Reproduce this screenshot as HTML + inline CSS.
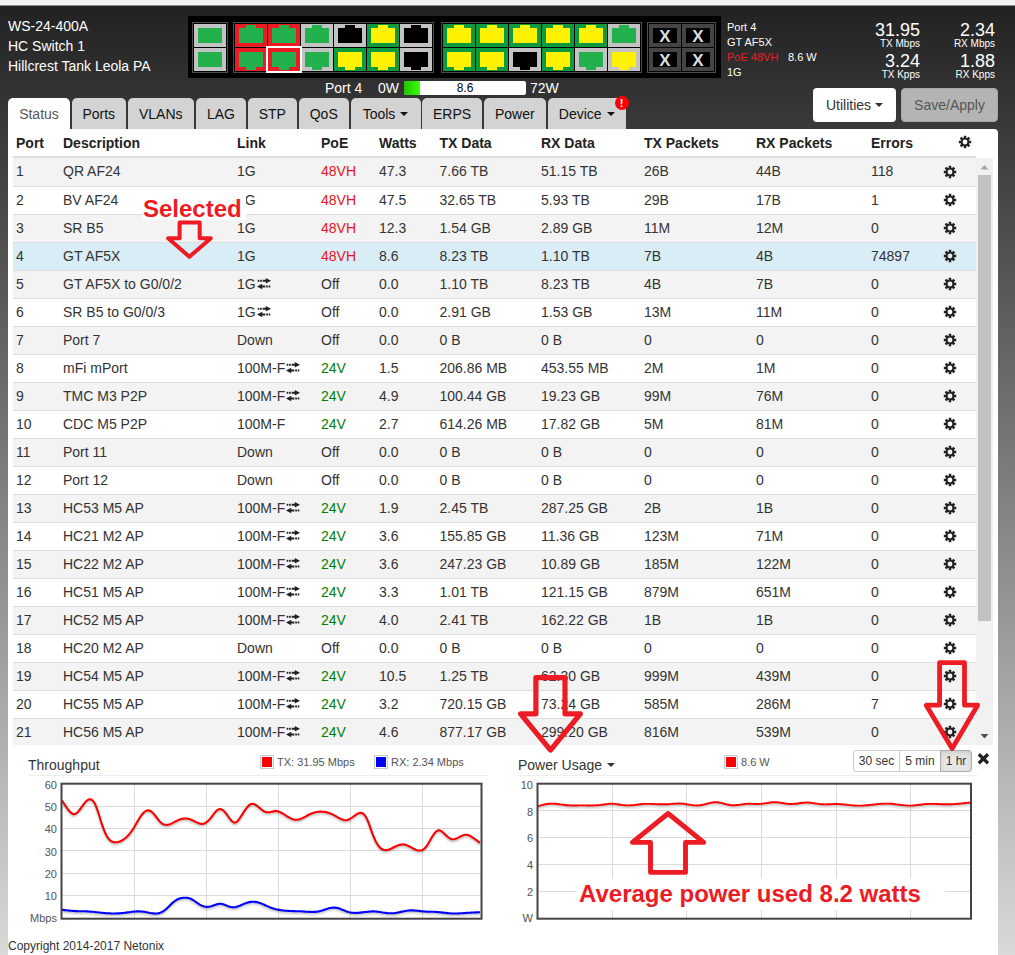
<!DOCTYPE html>
<html><head><meta charset="utf-8"><title>WS-24-400A</title>
<style>
*{box-sizing:border-box}
html,body{margin:0;padding:0}
body{width:1015px;height:955px;position:relative;overflow:hidden;font-family:"Liberation Sans",Arial,sans-serif;font-size:14px;line-height:20px;color:#333;
background:linear-gradient(to bottom,#f2f2f2 0,#f2f2f2 4px,#fafafa 5px,#222 6px,#d9d9d9 955px);}
.abs{position:absolute}
.t{position:absolute;white-space:nowrap}
.w{color:#fff}
#panel{position:absolute;left:8px;top:129px;width:990px;height:830px;background:#fff;border-radius:0 4px 0 0}
.tab{position:absolute;top:98px;height:31px;background:#d3d3d3;border-radius:5px 5px 0 0;color:#111;text-align:center;line-height:20px;padding-top:6px;font-size:14px}
.tab.act{background:#fff;color:#555}
.caret{display:inline-block;width:0;height:0;border-left:4px solid transparent;border-right:4px solid transparent;border-top:4px solid currentColor;vertical-align:middle;margin-left:4px;position:relative;top:-1px}
.row{position:absolute;left:13px;width:963px;height:28px;border-top:1px solid #ddd}
.row.first{border-top:0}
.row span.c{position:absolute;top:3px;white-space:nowrap;line-height:20px}
.odd{background:#f3f3f3}
.sel{background:#d9edf7}
.redt{color:#e8141c}
.grn{color:#008000}
.btn{position:absolute;border-radius:4px;font-size:14px;line-height:20px;text-align:center}
.pg{position:absolute;border:1px solid #4d4d4d}
.pc{position:absolute;width:32px;height:23px}
.pc i{position:absolute;left:4px;top:4px;width:24px;height:15px}
.pc b{position:absolute;left:11px;width:10px;height:4px}
.pc.up b{top:1px}
.pc.dn b{bottom:1px}
.xc{position:absolute;width:32px;height:23px;background:#444}
.xc i{position:absolute;left:4px;top:4px;width:24px;height:15px;background:#000;color:#ddd;font:bold 17px/18px "Liberation Sans",Arial,sans-serif;text-align:center;font-style:normal;overflow:visible}
.yl{position:absolute;font-size:11px;line-height:12px;color:#545454;text-align:right;white-space:nowrap}
.lg{position:absolute;width:14px;height:14px;border:1px solid #ccc;padding:1px;background:#fff}
.lg i{display:block;width:10px;height:10px}
.lt{position:absolute;font-size:11px;line-height:14px;color:#545454;white-space:nowrap}
.bx{position:absolute;top:750px;height:22px;border:1px solid #ccc;background:#fff;font-size:12px;line-height:20px;text-align:center;color:#333}
</style></head><body>

<div class="t w" style="left:8px;top:16px">WS-24-400A</div>
<div class="t w" style="left:8px;top:36px">HC Switch 1</div>
<div class="t w" style="left:8px;top:56px">Hillcrest Tank Leola PA</div>
<div class="abs" style="left:188px;top:16px;width:533px;height:62px;background:#000"></div>
<div class="pg" style="left:192px;top:22px;width:36px;height:51px"></div>
<div class="pg" style="left:233px;top:22px;width:201px;height:51px"></div>
<div class="pg" style="left:441px;top:22px;width:201px;height:51px"></div>
<div class="pg" style="left:647px;top:22px;width:69px;height:51px"></div>
<div class="pc up" style="left:194px;top:24px;background:#c3c3c3"><i style="background:#22b14c"></i></div>
<div class="pc dn" style="left:194px;top:48px;background:#c3c3c3"><i style="background:#22b14c"></i></div>
<div class="pc up" style="left:235px;top:24px;background:#ed1c24"><i style="background:#22b14c"></i><b style="background:#22b14c"></b></div>
<div class="pc up" style="left:268px;top:24px;background:#ed1c24"><i style="background:#22b14c"></i><b style="background:#22b14c"></b></div>
<div class="pc up" style="left:301px;top:24px;background:#c3c3c3"><i style="background:#22b14c"></i><b style="background:#22b14c"></b></div>
<div class="pc up" style="left:334px;top:24px;background:#c3c3c3"><i style="background:#000"></i><b style="background:#000"></b></div>
<div class="pc up" style="left:367px;top:24px;background:#0e9a3f"><i style="background:#fff200"></i><b style="background:#fff200"></b></div>
<div class="pc up" style="left:400px;top:24px;background:#c3c3c3"><i style="background:#000"></i><b style="background:#000"></b></div>
<div class="pc dn" style="left:235px;top:48px;background:#ed1c24"><i style="background:#22b14c"></i><b style="background:#22b14c"></b></div>
<div class="pc dn" style="left:268px;top:48px;background:#ed1c24"><i style="background:#22b14c"></i><b style="background:#22b14c"></b></div>
<div class="pc dn" style="left:301px;top:48px;background:#c3c3c3"><i style="background:#22b14c"></i><b style="background:#22b14c"></b></div>
<div class="pc dn" style="left:334px;top:48px;background:#0e9a3f"><i style="background:#fff200"></i><b style="background:#fff200"></b></div>
<div class="pc dn" style="left:367px;top:48px;background:#0e9a3f"><i style="background:#fff200"></i><b style="background:#fff200"></b></div>
<div class="pc dn" style="left:400px;top:48px;background:#c3c3c3"><i style="background:#000"></i><b style="background:#000"></b></div>
<div class="pc up" style="left:443px;top:24px;background:#0e9a3f"><i style="background:#fff200"></i><b style="background:#fff200"></b></div>
<div class="pc up" style="left:476px;top:24px;background:#0e9a3f"><i style="background:#fff200"></i><b style="background:#fff200"></b></div>
<div class="pc up" style="left:509px;top:24px;background:#0e9a3f"><i style="background:#fff200"></i><b style="background:#fff200"></b></div>
<div class="pc up" style="left:542px;top:24px;background:#0e9a3f"><i style="background:#fff200"></i><b style="background:#fff200"></b></div>
<div class="pc up" style="left:575px;top:24px;background:#0e9a3f"><i style="background:#fff200"></i><b style="background:#fff200"></b></div>
<div class="pc up" style="left:608px;top:24px;background:#c3c3c3"><i style="background:#22b14c"></i><b style="background:#22b14c"></b></div>
<div class="pc dn" style="left:443px;top:48px;background:#0e9a3f"><i style="background:#fff200"></i><b style="background:#fff200"></b></div>
<div class="pc dn" style="left:476px;top:48px;background:#0e9a3f"><i style="background:#fff200"></i><b style="background:#fff200"></b></div>
<div class="pc dn" style="left:509px;top:48px;background:#c3c3c3"><i style="background:#000"></i><b style="background:#000"></b></div>
<div class="pc dn" style="left:542px;top:48px;background:#0e9a3f"><i style="background:#fff200"></i><b style="background:#fff200"></b></div>
<div class="pc dn" style="left:575px;top:48px;background:#c3c3c3"><i style="background:#22b14c"></i><b style="background:#22b14c"></b></div>
<div class="pc dn" style="left:608px;top:48px;background:#c3c3c3"><i style="background:#fff200"></i><b style="background:#fff200"></b></div>
<div class="abs" style="left:266px;top:46px;width:36px;height:27px;border:2px solid #fff"></div>
<div class="xc" style="left:649px;top:24px"><i>X</i></div>
<div class="xc" style="left:649px;top:48px"><i>X</i></div>
<div class="xc" style="left:682px;top:24px"><i>X</i></div>
<div class="xc" style="left:682px;top:48px"><i>X</i></div>
<div class="t w" style="left:325px;top:78px">Port 4</div>
<div class="t w" style="left:378px;top:78px">0W</div>
<div class="abs" style="left:404px;top:81px;width:122px;height:14px;background:#fff;border-radius:2px;overflow:hidden"><div style="width:16px;height:14px;background:linear-gradient(to right,#1fc400,#3cff00)"></div></div>
<div class="t" style="left:404px;top:81px;width:122px;text-align:center;font-size:12px;line-height:14px;color:#000">8.6</div>
<div class="t w" style="left:530px;top:78px">72W</div>
<div class="t w" style="left:727px;top:20px;font-size:11px;line-height:15px">Port 4</div>
<div class="t w" style="left:727px;top:35px;font-size:11px;line-height:15px">GT AF5X</div>
<div class="t" style="left:727px;top:50px;font-size:11px;line-height:15px;color:#ee1c24">PoE 48VH</div>
<div class="t w" style="left:788px;top:50px;font-size:11px;line-height:15px">8.6 W</div>
<div class="t w" style="left:727px;top:65px;font-size:11px;line-height:15px">1G</div>
<div class="t w" style="right:95px;top:20px;font-size:18px;line-height:20px;text-align:right">31.95</div>
<div class="t w" style="right:95px;top:38px;font-size:10px;line-height:12px;text-align:right">TX Mbps</div>
<div class="t w" style="right:20px;top:20px;font-size:18px;line-height:20px;text-align:right">2.34</div>
<div class="t w" style="right:20px;top:38px;font-size:10px;line-height:12px;text-align:right">RX Mbps</div>
<div class="t w" style="right:95px;top:51px;font-size:18px;line-height:20px;text-align:right">3.24</div>
<div class="t w" style="right:95px;top:69px;font-size:10px;line-height:12px;text-align:right">TX Kpps</div>
<div class="t w" style="right:20px;top:51px;font-size:18px;line-height:20px;text-align:right">1.88</div>
<div class="t w" style="right:20px;top:69px;font-size:10px;line-height:12px;text-align:right">RX Kpps</div>
<div class="btn" style="left:813px;top:88px;width:83px;height:34px;background:#fff;color:#333;padding-top:7px">Utilities<span class="caret"></span></div>
<div class="btn" style="left:901px;top:88px;width:97px;height:34px;background:#b4b4b4;color:#555;padding-top:6px;border:1px solid #a8a8a8">Save/Apply</div>
<div class="tab act" style="left:8.0px;width:62.0px">Status</div>
<div class="tab" style="left:72.0px;width:53.5px">Ports</div>
<div class="tab" style="left:127.5px;width:66.5px">VLANs</div>
<div class="tab" style="left:196.0px;width:50.0px">LAG</div>
<div class="tab" style="left:247.5px;width:49.5px">STP</div>
<div class="tab" style="left:298.5px;width:50.5px">QoS</div>
<div class="tab" style="left:350.5px;width:70.0px">Tools<span class="caret" style="margin-left:5px"></span></div>
<div class="tab" style="left:422.0px;width:60.0px">ERPS</div>
<div class="tab" style="left:483.5px;width:62.5px">Power</div>
<div class="tab" style="left:547.5px;width:78.5px">Device<span class="caret" style="margin-left:5px"></span></div>
<div class="abs" style="left:614.5px;top:95.5px;width:14px;height:14px;border-radius:7px;background:#f00;color:#fff;font:bold 11px/14px 'Liberation Sans',Arial,sans-serif;text-align:center">!</div>
<div id="panel"></div>
<div class="t" style="left:16.0px;top:133px;font-weight:bold;color:#222">Port</div>
<div class="t" style="left:63.0px;top:133px;font-weight:bold;color:#222">Description</div>
<div class="t" style="left:237.0px;top:133px;font-weight:bold;color:#222">Link</div>
<div class="t" style="left:321.0px;top:133px;font-weight:bold;color:#222">PoE</div>
<div class="t" style="left:379.0px;top:133px;font-weight:bold;color:#222">Watts</div>
<div class="t" style="left:439.5px;top:133px;font-weight:bold;color:#222">TX Data</div>
<div class="t" style="left:541.0px;top:133px;font-weight:bold;color:#222">RX Data</div>
<div class="t" style="left:644.0px;top:133px;font-weight:bold;color:#222">TX Packets</div>
<div class="t" style="left:756.0px;top:133px;font-weight:bold;color:#222">RX Packets</div>
<div class="t" style="left:871.0px;top:133px;font-weight:bold;color:#222">Errors</div>
<span style="position:absolute;left:957.0px;top:134.0px;width:16px;height:16px"><svg class="gear" viewBox="-8 -8 16 16" width="16" height="16"><g fill="#222"><rect x="-1.3" y="-6.2" width="2.6" height="12.4" transform="rotate(0)"/><rect x="-1.3" y="-6.2" width="2.6" height="12.4" transform="rotate(45)"/><rect x="-1.3" y="-6.2" width="2.6" height="12.4" transform="rotate(90)"/><rect x="-1.3" y="-6.2" width="2.6" height="12.4" transform="rotate(135)"/><circle r="4.3"/></g><circle r="2.4" fill="#fff"/></svg></span>
<div class="abs" style="left:13px;top:156px;width:963px;height:2px;background:#ddd"></div>
<div class="row first odd" style="top:158px;height:28px"><span class="c" style="left:3.0px">1</span><span class="c" style="left:50.0px">QR AF24</span><span class="c" style="left:224.0px">1G</span><span class="c redt" style="left:308.0px">48VH</span><span class="c" style="left:366.0px">47.3</span><span class="c" style="left:426.5px">7.66 TB</span><span class="c" style="left:528.0px">51.15 TB</span><span class="c" style="left:631.0px">26B</span><span class="c" style="left:743.0px">44B</span><span class="c" style="left:858.0px">118</span><span style="position:absolute;left:929.0px;top:6.0px;width:16px;height:16px"><svg class="gear" viewBox="-8 -8 16 16" width="16" height="16"><g fill="#222"><rect x="-1.3" y="-6.2" width="2.6" height="12.4" transform="rotate(0)"/><rect x="-1.3" y="-6.2" width="2.6" height="12.4" transform="rotate(45)"/><rect x="-1.3" y="-6.2" width="2.6" height="12.4" transform="rotate(90)"/><rect x="-1.3" y="-6.2" width="2.6" height="12.4" transform="rotate(135)"/><circle r="4.3"/></g><circle r="2.4" fill="#f3f3f3"/></svg></span></div>
<div class="row" style="top:186px;height:28px"><span class="c" style="left:3.0px">2</span><span class="c" style="left:50.0px">BV AF24</span><span class="c" style="left:224.0px">1G</span><span class="c redt" style="left:308.0px">48VH</span><span class="c" style="left:366.0px">47.5</span><span class="c" style="left:426.5px">32.65 TB</span><span class="c" style="left:528.0px">5.93 TB</span><span class="c" style="left:631.0px">29B</span><span class="c" style="left:743.0px">17B</span><span class="c" style="left:858.0px">1</span><span style="position:absolute;left:929.0px;top:5.0px;width:16px;height:16px"><svg class="gear" viewBox="-8 -8 16 16" width="16" height="16"><g fill="#222"><rect x="-1.3" y="-6.2" width="2.6" height="12.4" transform="rotate(0)"/><rect x="-1.3" y="-6.2" width="2.6" height="12.4" transform="rotate(45)"/><rect x="-1.3" y="-6.2" width="2.6" height="12.4" transform="rotate(90)"/><rect x="-1.3" y="-6.2" width="2.6" height="12.4" transform="rotate(135)"/><circle r="4.3"/></g><circle r="2.4" fill="#fff"/></svg></span></div>
<div class="row odd" style="top:214px;height:28px"><span class="c" style="left:3.0px">3</span><span class="c" style="left:50.0px">SR B5</span><span class="c" style="left:224.0px">1G</span><span class="c redt" style="left:308.0px">48VH</span><span class="c" style="left:366.0px">12.3</span><span class="c" style="left:426.5px">1.54 GB</span><span class="c" style="left:528.0px">2.89 GB</span><span class="c" style="left:631.0px">11M</span><span class="c" style="left:743.0px">12M</span><span class="c" style="left:858.0px">0</span><span style="position:absolute;left:929.0px;top:5.0px;width:16px;height:16px"><svg class="gear" viewBox="-8 -8 16 16" width="16" height="16"><g fill="#222"><rect x="-1.3" y="-6.2" width="2.6" height="12.4" transform="rotate(0)"/><rect x="-1.3" y="-6.2" width="2.6" height="12.4" transform="rotate(45)"/><rect x="-1.3" y="-6.2" width="2.6" height="12.4" transform="rotate(90)"/><rect x="-1.3" y="-6.2" width="2.6" height="12.4" transform="rotate(135)"/><circle r="4.3"/></g><circle r="2.4" fill="#f3f3f3"/></svg></span></div>
<div class="row sel" style="top:242px;height:28px"><span class="c" style="left:3.0px">4</span><span class="c" style="left:50.0px">GT AF5X</span><span class="c" style="left:224.0px">1G</span><span class="c redt" style="left:308.0px">48VH</span><span class="c" style="left:366.0px">8.6</span><span class="c" style="left:426.5px">8.23 TB</span><span class="c" style="left:528.0px">1.10 TB</span><span class="c" style="left:631.0px">7B</span><span class="c" style="left:743.0px">4B</span><span class="c" style="left:858.0px">74897</span><span style="position:absolute;left:929.0px;top:5.0px;width:16px;height:16px"><svg class="gear" viewBox="-8 -8 16 16" width="16" height="16"><g fill="#222"><rect x="-1.3" y="-6.2" width="2.6" height="12.4" transform="rotate(0)"/><rect x="-1.3" y="-6.2" width="2.6" height="12.4" transform="rotate(45)"/><rect x="-1.3" y="-6.2" width="2.6" height="12.4" transform="rotate(90)"/><rect x="-1.3" y="-6.2" width="2.6" height="12.4" transform="rotate(135)"/><circle r="4.3"/></g><circle r="2.4" fill="#d9edf7"/></svg></span></div>
<div class="row odd" style="top:270px;height:28px"><span class="c" style="left:3.0px">5</span><span class="c" style="left:50.0px">GT AF5X to G0/0/2</span><span class="c" style="left:224.0px">1G</span><span class="c" style="left:308.0px">Off</span><span class="c" style="left:366.0px">0.0</span><span class="c" style="left:426.5px">1.10 TB</span><span class="c" style="left:528.0px">8.23 TB</span><span class="c" style="left:631.0px">4B</span><span class="c" style="left:743.0px">7B</span><span class="c" style="left:858.0px">0</span><svg viewBox="0 0 14 11.4" width="14" height="11.4" style="position:absolute;left:244.0px;top:7.2px"><g fill="#222"><path d="M8.8 0L14 2.8 8.8 5.6V3.8H5.7V1.8h3.1z"/><rect x="3.1" y="1.8" width="1.7" height="2"/><rect x="0.7" y="1.8" width="1.6" height="2"/><path d="M5.2 5.7L0 8.5l5.2 2.8V9.5h3.1V7.5H5.2z"/><rect x="9.2" y="7.5" width="1.7" height="2"/><rect x="11.7" y="7.5" width="1.6" height="2"/></g></svg><span style="position:absolute;left:929.0px;top:5.0px;width:16px;height:16px"><svg class="gear" viewBox="-8 -8 16 16" width="16" height="16"><g fill="#222"><rect x="-1.3" y="-6.2" width="2.6" height="12.4" transform="rotate(0)"/><rect x="-1.3" y="-6.2" width="2.6" height="12.4" transform="rotate(45)"/><rect x="-1.3" y="-6.2" width="2.6" height="12.4" transform="rotate(90)"/><rect x="-1.3" y="-6.2" width="2.6" height="12.4" transform="rotate(135)"/><circle r="4.3"/></g><circle r="2.4" fill="#f3f3f3"/></svg></span></div>
<div class="row" style="top:298px;height:28px"><span class="c" style="left:3.0px">6</span><span class="c" style="left:50.0px">SR B5 to G0/0/3</span><span class="c" style="left:224.0px">1G</span><span class="c" style="left:308.0px">Off</span><span class="c" style="left:366.0px">0.0</span><span class="c" style="left:426.5px">2.91 GB</span><span class="c" style="left:528.0px">1.53 GB</span><span class="c" style="left:631.0px">13M</span><span class="c" style="left:743.0px">11M</span><span class="c" style="left:858.0px">0</span><svg viewBox="0 0 14 11.4" width="14" height="11.4" style="position:absolute;left:244.0px;top:7.2px"><g fill="#222"><path d="M8.8 0L14 2.8 8.8 5.6V3.8H5.7V1.8h3.1z"/><rect x="3.1" y="1.8" width="1.7" height="2"/><rect x="0.7" y="1.8" width="1.6" height="2"/><path d="M5.2 5.7L0 8.5l5.2 2.8V9.5h3.1V7.5H5.2z"/><rect x="9.2" y="7.5" width="1.7" height="2"/><rect x="11.7" y="7.5" width="1.6" height="2"/></g></svg><span style="position:absolute;left:929.0px;top:5.0px;width:16px;height:16px"><svg class="gear" viewBox="-8 -8 16 16" width="16" height="16"><g fill="#222"><rect x="-1.3" y="-6.2" width="2.6" height="12.4" transform="rotate(0)"/><rect x="-1.3" y="-6.2" width="2.6" height="12.4" transform="rotate(45)"/><rect x="-1.3" y="-6.2" width="2.6" height="12.4" transform="rotate(90)"/><rect x="-1.3" y="-6.2" width="2.6" height="12.4" transform="rotate(135)"/><circle r="4.3"/></g><circle r="2.4" fill="#fff"/></svg></span></div>
<div class="row odd" style="top:326px;height:28px"><span class="c" style="left:3.0px">7</span><span class="c" style="left:50.0px">Port 7</span><span class="c" style="left:224.0px">Down</span><span class="c" style="left:308.0px">Off</span><span class="c" style="left:366.0px">0.0</span><span class="c" style="left:426.5px">0 B</span><span class="c" style="left:528.0px">0 B</span><span class="c" style="left:631.0px">0</span><span class="c" style="left:743.0px">0</span><span class="c" style="left:858.0px">0</span><span style="position:absolute;left:929.0px;top:5.0px;width:16px;height:16px"><svg class="gear" viewBox="-8 -8 16 16" width="16" height="16"><g fill="#222"><rect x="-1.3" y="-6.2" width="2.6" height="12.4" transform="rotate(0)"/><rect x="-1.3" y="-6.2" width="2.6" height="12.4" transform="rotate(45)"/><rect x="-1.3" y="-6.2" width="2.6" height="12.4" transform="rotate(90)"/><rect x="-1.3" y="-6.2" width="2.6" height="12.4" transform="rotate(135)"/><circle r="4.3"/></g><circle r="2.4" fill="#f3f3f3"/></svg></span></div>
<div class="row" style="top:354px;height:28px"><span class="c" style="left:3.0px">8</span><span class="c" style="left:50.0px">mFi mPort</span><span class="c" style="left:224.0px">100M-F</span><span class="c grn" style="left:308.0px">24V</span><span class="c" style="left:366.0px">1.5</span><span class="c" style="left:426.5px">206.86 MB</span><span class="c" style="left:528.0px">453.55 MB</span><span class="c" style="left:631.0px">2M</span><span class="c" style="left:743.0px">1M</span><span class="c" style="left:858.0px">0</span><svg viewBox="0 0 14 11.4" width="14" height="11.4" style="position:absolute;left:273.0px;top:7.2px"><g fill="#222"><path d="M8.8 0L14 2.8 8.8 5.6V3.8H5.7V1.8h3.1z"/><rect x="3.1" y="1.8" width="1.7" height="2"/><rect x="0.7" y="1.8" width="1.6" height="2"/><path d="M5.2 5.7L0 8.5l5.2 2.8V9.5h3.1V7.5H5.2z"/><rect x="9.2" y="7.5" width="1.7" height="2"/><rect x="11.7" y="7.5" width="1.6" height="2"/></g></svg><span style="position:absolute;left:929.0px;top:5.0px;width:16px;height:16px"><svg class="gear" viewBox="-8 -8 16 16" width="16" height="16"><g fill="#222"><rect x="-1.3" y="-6.2" width="2.6" height="12.4" transform="rotate(0)"/><rect x="-1.3" y="-6.2" width="2.6" height="12.4" transform="rotate(45)"/><rect x="-1.3" y="-6.2" width="2.6" height="12.4" transform="rotate(90)"/><rect x="-1.3" y="-6.2" width="2.6" height="12.4" transform="rotate(135)"/><circle r="4.3"/></g><circle r="2.4" fill="#fff"/></svg></span></div>
<div class="row odd" style="top:382px;height:28px"><span class="c" style="left:3.0px">9</span><span class="c" style="left:50.0px">TMC M3 P2P</span><span class="c" style="left:224.0px">100M-F</span><span class="c grn" style="left:308.0px">24V</span><span class="c" style="left:366.0px">4.9</span><span class="c" style="left:426.5px">100.44 GB</span><span class="c" style="left:528.0px">19.23 GB</span><span class="c" style="left:631.0px">99M</span><span class="c" style="left:743.0px">76M</span><span class="c" style="left:858.0px">0</span><svg viewBox="0 0 14 11.4" width="14" height="11.4" style="position:absolute;left:273.0px;top:7.2px"><g fill="#222"><path d="M8.8 0L14 2.8 8.8 5.6V3.8H5.7V1.8h3.1z"/><rect x="3.1" y="1.8" width="1.7" height="2"/><rect x="0.7" y="1.8" width="1.6" height="2"/><path d="M5.2 5.7L0 8.5l5.2 2.8V9.5h3.1V7.5H5.2z"/><rect x="9.2" y="7.5" width="1.7" height="2"/><rect x="11.7" y="7.5" width="1.6" height="2"/></g></svg><span style="position:absolute;left:929.0px;top:5.0px;width:16px;height:16px"><svg class="gear" viewBox="-8 -8 16 16" width="16" height="16"><g fill="#222"><rect x="-1.3" y="-6.2" width="2.6" height="12.4" transform="rotate(0)"/><rect x="-1.3" y="-6.2" width="2.6" height="12.4" transform="rotate(45)"/><rect x="-1.3" y="-6.2" width="2.6" height="12.4" transform="rotate(90)"/><rect x="-1.3" y="-6.2" width="2.6" height="12.4" transform="rotate(135)"/><circle r="4.3"/></g><circle r="2.4" fill="#f3f3f3"/></svg></span></div>
<div class="row" style="top:410px;height:28px"><span class="c" style="left:3.0px">10</span><span class="c" style="left:50.0px">CDC M5 P2P</span><span class="c" style="left:224.0px">100M-F</span><span class="c grn" style="left:308.0px">24V</span><span class="c" style="left:366.0px">2.7</span><span class="c" style="left:426.5px">614.26 MB</span><span class="c" style="left:528.0px">17.82 GB</span><span class="c" style="left:631.0px">5M</span><span class="c" style="left:743.0px">81M</span><span class="c" style="left:858.0px">0</span><span style="position:absolute;left:929.0px;top:5.0px;width:16px;height:16px"><svg class="gear" viewBox="-8 -8 16 16" width="16" height="16"><g fill="#222"><rect x="-1.3" y="-6.2" width="2.6" height="12.4" transform="rotate(0)"/><rect x="-1.3" y="-6.2" width="2.6" height="12.4" transform="rotate(45)"/><rect x="-1.3" y="-6.2" width="2.6" height="12.4" transform="rotate(90)"/><rect x="-1.3" y="-6.2" width="2.6" height="12.4" transform="rotate(135)"/><circle r="4.3"/></g><circle r="2.4" fill="#fff"/></svg></span></div>
<div class="row odd" style="top:438px;height:28px"><span class="c" style="left:3.0px">11</span><span class="c" style="left:50.0px">Port 11</span><span class="c" style="left:224.0px">Down</span><span class="c" style="left:308.0px">Off</span><span class="c" style="left:366.0px">0.0</span><span class="c" style="left:426.5px">0 B</span><span class="c" style="left:528.0px">0 B</span><span class="c" style="left:631.0px">0</span><span class="c" style="left:743.0px">0</span><span class="c" style="left:858.0px">0</span><span style="position:absolute;left:929.0px;top:5.0px;width:16px;height:16px"><svg class="gear" viewBox="-8 -8 16 16" width="16" height="16"><g fill="#222"><rect x="-1.3" y="-6.2" width="2.6" height="12.4" transform="rotate(0)"/><rect x="-1.3" y="-6.2" width="2.6" height="12.4" transform="rotate(45)"/><rect x="-1.3" y="-6.2" width="2.6" height="12.4" transform="rotate(90)"/><rect x="-1.3" y="-6.2" width="2.6" height="12.4" transform="rotate(135)"/><circle r="4.3"/></g><circle r="2.4" fill="#f3f3f3"/></svg></span></div>
<div class="row" style="top:466px;height:28px"><span class="c" style="left:3.0px">12</span><span class="c" style="left:50.0px">Port 12</span><span class="c" style="left:224.0px">Down</span><span class="c" style="left:308.0px">Off</span><span class="c" style="left:366.0px">0.0</span><span class="c" style="left:426.5px">0 B</span><span class="c" style="left:528.0px">0 B</span><span class="c" style="left:631.0px">0</span><span class="c" style="left:743.0px">0</span><span class="c" style="left:858.0px">0</span><span style="position:absolute;left:929.0px;top:5.0px;width:16px;height:16px"><svg class="gear" viewBox="-8 -8 16 16" width="16" height="16"><g fill="#222"><rect x="-1.3" y="-6.2" width="2.6" height="12.4" transform="rotate(0)"/><rect x="-1.3" y="-6.2" width="2.6" height="12.4" transform="rotate(45)"/><rect x="-1.3" y="-6.2" width="2.6" height="12.4" transform="rotate(90)"/><rect x="-1.3" y="-6.2" width="2.6" height="12.4" transform="rotate(135)"/><circle r="4.3"/></g><circle r="2.4" fill="#fff"/></svg></span></div>
<div class="row odd" style="top:494px;height:28px"><span class="c" style="left:3.0px">13</span><span class="c" style="left:50.0px">HC53 M5 AP</span><span class="c" style="left:224.0px">100M-F</span><span class="c grn" style="left:308.0px">24V</span><span class="c" style="left:366.0px">1.9</span><span class="c" style="left:426.5px">2.45 TB</span><span class="c" style="left:528.0px">287.25 GB</span><span class="c" style="left:631.0px">2B</span><span class="c" style="left:743.0px">1B</span><span class="c" style="left:858.0px">0</span><svg viewBox="0 0 14 11.4" width="14" height="11.4" style="position:absolute;left:273.0px;top:7.2px"><g fill="#222"><path d="M8.8 0L14 2.8 8.8 5.6V3.8H5.7V1.8h3.1z"/><rect x="3.1" y="1.8" width="1.7" height="2"/><rect x="0.7" y="1.8" width="1.6" height="2"/><path d="M5.2 5.7L0 8.5l5.2 2.8V9.5h3.1V7.5H5.2z"/><rect x="9.2" y="7.5" width="1.7" height="2"/><rect x="11.7" y="7.5" width="1.6" height="2"/></g></svg><span style="position:absolute;left:929.0px;top:5.0px;width:16px;height:16px"><svg class="gear" viewBox="-8 -8 16 16" width="16" height="16"><g fill="#222"><rect x="-1.3" y="-6.2" width="2.6" height="12.4" transform="rotate(0)"/><rect x="-1.3" y="-6.2" width="2.6" height="12.4" transform="rotate(45)"/><rect x="-1.3" y="-6.2" width="2.6" height="12.4" transform="rotate(90)"/><rect x="-1.3" y="-6.2" width="2.6" height="12.4" transform="rotate(135)"/><circle r="4.3"/></g><circle r="2.4" fill="#f3f3f3"/></svg></span></div>
<div class="row" style="top:522px;height:28px"><span class="c" style="left:3.0px">14</span><span class="c" style="left:50.0px">HC21 M2 AP</span><span class="c" style="left:224.0px">100M-F</span><span class="c grn" style="left:308.0px">24V</span><span class="c" style="left:366.0px">3.6</span><span class="c" style="left:426.5px">155.85 GB</span><span class="c" style="left:528.0px">11.36 GB</span><span class="c" style="left:631.0px">123M</span><span class="c" style="left:743.0px">71M</span><span class="c" style="left:858.0px">0</span><svg viewBox="0 0 14 11.4" width="14" height="11.4" style="position:absolute;left:273.0px;top:7.2px"><g fill="#222"><path d="M8.8 0L14 2.8 8.8 5.6V3.8H5.7V1.8h3.1z"/><rect x="3.1" y="1.8" width="1.7" height="2"/><rect x="0.7" y="1.8" width="1.6" height="2"/><path d="M5.2 5.7L0 8.5l5.2 2.8V9.5h3.1V7.5H5.2z"/><rect x="9.2" y="7.5" width="1.7" height="2"/><rect x="11.7" y="7.5" width="1.6" height="2"/></g></svg><span style="position:absolute;left:929.0px;top:5.0px;width:16px;height:16px"><svg class="gear" viewBox="-8 -8 16 16" width="16" height="16"><g fill="#222"><rect x="-1.3" y="-6.2" width="2.6" height="12.4" transform="rotate(0)"/><rect x="-1.3" y="-6.2" width="2.6" height="12.4" transform="rotate(45)"/><rect x="-1.3" y="-6.2" width="2.6" height="12.4" transform="rotate(90)"/><rect x="-1.3" y="-6.2" width="2.6" height="12.4" transform="rotate(135)"/><circle r="4.3"/></g><circle r="2.4" fill="#fff"/></svg></span></div>
<div class="row odd" style="top:550px;height:28px"><span class="c" style="left:3.0px">15</span><span class="c" style="left:50.0px">HC22 M2 AP</span><span class="c" style="left:224.0px">100M-F</span><span class="c grn" style="left:308.0px">24V</span><span class="c" style="left:366.0px">3.6</span><span class="c" style="left:426.5px">247.23 GB</span><span class="c" style="left:528.0px">10.89 GB</span><span class="c" style="left:631.0px">185M</span><span class="c" style="left:743.0px">122M</span><span class="c" style="left:858.0px">0</span><svg viewBox="0 0 14 11.4" width="14" height="11.4" style="position:absolute;left:273.0px;top:7.2px"><g fill="#222"><path d="M8.8 0L14 2.8 8.8 5.6V3.8H5.7V1.8h3.1z"/><rect x="3.1" y="1.8" width="1.7" height="2"/><rect x="0.7" y="1.8" width="1.6" height="2"/><path d="M5.2 5.7L0 8.5l5.2 2.8V9.5h3.1V7.5H5.2z"/><rect x="9.2" y="7.5" width="1.7" height="2"/><rect x="11.7" y="7.5" width="1.6" height="2"/></g></svg><span style="position:absolute;left:929.0px;top:5.0px;width:16px;height:16px"><svg class="gear" viewBox="-8 -8 16 16" width="16" height="16"><g fill="#222"><rect x="-1.3" y="-6.2" width="2.6" height="12.4" transform="rotate(0)"/><rect x="-1.3" y="-6.2" width="2.6" height="12.4" transform="rotate(45)"/><rect x="-1.3" y="-6.2" width="2.6" height="12.4" transform="rotate(90)"/><rect x="-1.3" y="-6.2" width="2.6" height="12.4" transform="rotate(135)"/><circle r="4.3"/></g><circle r="2.4" fill="#f3f3f3"/></svg></span></div>
<div class="row" style="top:578px;height:28px"><span class="c" style="left:3.0px">16</span><span class="c" style="left:50.0px">HC51 M5 AP</span><span class="c" style="left:224.0px">100M-F</span><span class="c grn" style="left:308.0px">24V</span><span class="c" style="left:366.0px">3.3</span><span class="c" style="left:426.5px">1.01 TB</span><span class="c" style="left:528.0px">121.15 GB</span><span class="c" style="left:631.0px">879M</span><span class="c" style="left:743.0px">651M</span><span class="c" style="left:858.0px">0</span><svg viewBox="0 0 14 11.4" width="14" height="11.4" style="position:absolute;left:273.0px;top:7.2px"><g fill="#222"><path d="M8.8 0L14 2.8 8.8 5.6V3.8H5.7V1.8h3.1z"/><rect x="3.1" y="1.8" width="1.7" height="2"/><rect x="0.7" y="1.8" width="1.6" height="2"/><path d="M5.2 5.7L0 8.5l5.2 2.8V9.5h3.1V7.5H5.2z"/><rect x="9.2" y="7.5" width="1.7" height="2"/><rect x="11.7" y="7.5" width="1.6" height="2"/></g></svg><span style="position:absolute;left:929.0px;top:5.0px;width:16px;height:16px"><svg class="gear" viewBox="-8 -8 16 16" width="16" height="16"><g fill="#222"><rect x="-1.3" y="-6.2" width="2.6" height="12.4" transform="rotate(0)"/><rect x="-1.3" y="-6.2" width="2.6" height="12.4" transform="rotate(45)"/><rect x="-1.3" y="-6.2" width="2.6" height="12.4" transform="rotate(90)"/><rect x="-1.3" y="-6.2" width="2.6" height="12.4" transform="rotate(135)"/><circle r="4.3"/></g><circle r="2.4" fill="#fff"/></svg></span></div>
<div class="row odd" style="top:606px;height:28px"><span class="c" style="left:3.0px">17</span><span class="c" style="left:50.0px">HC52 M5 AP</span><span class="c" style="left:224.0px">100M-F</span><span class="c grn" style="left:308.0px">24V</span><span class="c" style="left:366.0px">4.0</span><span class="c" style="left:426.5px">2.41 TB</span><span class="c" style="left:528.0px">162.22 GB</span><span class="c" style="left:631.0px">1B</span><span class="c" style="left:743.0px">1B</span><span class="c" style="left:858.0px">0</span><svg viewBox="0 0 14 11.4" width="14" height="11.4" style="position:absolute;left:273.0px;top:7.2px"><g fill="#222"><path d="M8.8 0L14 2.8 8.8 5.6V3.8H5.7V1.8h3.1z"/><rect x="3.1" y="1.8" width="1.7" height="2"/><rect x="0.7" y="1.8" width="1.6" height="2"/><path d="M5.2 5.7L0 8.5l5.2 2.8V9.5h3.1V7.5H5.2z"/><rect x="9.2" y="7.5" width="1.7" height="2"/><rect x="11.7" y="7.5" width="1.6" height="2"/></g></svg><span style="position:absolute;left:929.0px;top:5.0px;width:16px;height:16px"><svg class="gear" viewBox="-8 -8 16 16" width="16" height="16"><g fill="#222"><rect x="-1.3" y="-6.2" width="2.6" height="12.4" transform="rotate(0)"/><rect x="-1.3" y="-6.2" width="2.6" height="12.4" transform="rotate(45)"/><rect x="-1.3" y="-6.2" width="2.6" height="12.4" transform="rotate(90)"/><rect x="-1.3" y="-6.2" width="2.6" height="12.4" transform="rotate(135)"/><circle r="4.3"/></g><circle r="2.4" fill="#f3f3f3"/></svg></span></div>
<div class="row" style="top:634px;height:28px"><span class="c" style="left:3.0px">18</span><span class="c" style="left:50.0px">HC20 M2 AP</span><span class="c" style="left:224.0px">Down</span><span class="c" style="left:308.0px">Off</span><span class="c" style="left:366.0px">0.0</span><span class="c" style="left:426.5px">0 B</span><span class="c" style="left:528.0px">0 B</span><span class="c" style="left:631.0px">0</span><span class="c" style="left:743.0px">0</span><span class="c" style="left:858.0px">0</span><span style="position:absolute;left:929.0px;top:5.0px;width:16px;height:16px"><svg class="gear" viewBox="-8 -8 16 16" width="16" height="16"><g fill="#222"><rect x="-1.3" y="-6.2" width="2.6" height="12.4" transform="rotate(0)"/><rect x="-1.3" y="-6.2" width="2.6" height="12.4" transform="rotate(45)"/><rect x="-1.3" y="-6.2" width="2.6" height="12.4" transform="rotate(90)"/><rect x="-1.3" y="-6.2" width="2.6" height="12.4" transform="rotate(135)"/><circle r="4.3"/></g><circle r="2.4" fill="#fff"/></svg></span></div>
<div class="row odd" style="top:662px;height:28px"><span class="c" style="left:3.0px">19</span><span class="c" style="left:50.0px">HC54 M5 AP</span><span class="c" style="left:224.0px">100M-F</span><span class="c grn" style="left:308.0px">24V</span><span class="c" style="left:366.0px">10.5</span><span class="c" style="left:426.5px">1.25 TB</span><span class="c" style="left:528.0px">62.30 GB</span><span class="c" style="left:631.0px">999M</span><span class="c" style="left:743.0px">439M</span><span class="c" style="left:858.0px">0</span><svg viewBox="0 0 14 11.4" width="14" height="11.4" style="position:absolute;left:273.0px;top:7.2px"><g fill="#222"><path d="M8.8 0L14 2.8 8.8 5.6V3.8H5.7V1.8h3.1z"/><rect x="3.1" y="1.8" width="1.7" height="2"/><rect x="0.7" y="1.8" width="1.6" height="2"/><path d="M5.2 5.7L0 8.5l5.2 2.8V9.5h3.1V7.5H5.2z"/><rect x="9.2" y="7.5" width="1.7" height="2"/><rect x="11.7" y="7.5" width="1.6" height="2"/></g></svg><span style="position:absolute;left:929.0px;top:5.0px;width:16px;height:16px"><svg class="gear" viewBox="-8 -8 16 16" width="16" height="16"><g fill="#222"><rect x="-1.3" y="-6.2" width="2.6" height="12.4" transform="rotate(0)"/><rect x="-1.3" y="-6.2" width="2.6" height="12.4" transform="rotate(45)"/><rect x="-1.3" y="-6.2" width="2.6" height="12.4" transform="rotate(90)"/><rect x="-1.3" y="-6.2" width="2.6" height="12.4" transform="rotate(135)"/><circle r="4.3"/></g><circle r="2.4" fill="#f3f3f3"/></svg></span></div>
<div class="row" style="top:690px;height:28px"><span class="c" style="left:3.0px">20</span><span class="c" style="left:50.0px">HC55 M5 AP</span><span class="c" style="left:224.0px">100M-F</span><span class="c grn" style="left:308.0px">24V</span><span class="c" style="left:366.0px">3.2</span><span class="c" style="left:426.5px">720.15 GB</span><span class="c" style="left:528.0px">73.24 GB</span><span class="c" style="left:631.0px">585M</span><span class="c" style="left:743.0px">286M</span><span class="c" style="left:858.0px">7</span><svg viewBox="0 0 14 11.4" width="14" height="11.4" style="position:absolute;left:273.0px;top:7.2px"><g fill="#222"><path d="M8.8 0L14 2.8 8.8 5.6V3.8H5.7V1.8h3.1z"/><rect x="3.1" y="1.8" width="1.7" height="2"/><rect x="0.7" y="1.8" width="1.6" height="2"/><path d="M5.2 5.7L0 8.5l5.2 2.8V9.5h3.1V7.5H5.2z"/><rect x="9.2" y="7.5" width="1.7" height="2"/><rect x="11.7" y="7.5" width="1.6" height="2"/></g></svg><span style="position:absolute;left:929.0px;top:5.0px;width:16px;height:16px"><svg class="gear" viewBox="-8 -8 16 16" width="16" height="16"><g fill="#222"><rect x="-1.3" y="-6.2" width="2.6" height="12.4" transform="rotate(0)"/><rect x="-1.3" y="-6.2" width="2.6" height="12.4" transform="rotate(45)"/><rect x="-1.3" y="-6.2" width="2.6" height="12.4" transform="rotate(90)"/><rect x="-1.3" y="-6.2" width="2.6" height="12.4" transform="rotate(135)"/><circle r="4.3"/></g><circle r="2.4" fill="#fff"/></svg></span></div>
<div class="row odd" style="top:718px;height:27px"><span class="c" style="left:3.0px">21</span><span class="c" style="left:50.0px">HC56 M5 AP</span><span class="c" style="left:224.0px">100M-F</span><span class="c grn" style="left:308.0px">24V</span><span class="c" style="left:366.0px">4.6</span><span class="c" style="left:426.5px">877.17 GB</span><span class="c" style="left:528.0px">299.20 GB</span><span class="c" style="left:631.0px">816M</span><span class="c" style="left:743.0px">539M</span><span class="c" style="left:858.0px">0</span><svg viewBox="0 0 14 11.4" width="14" height="11.4" style="position:absolute;left:273.0px;top:7.2px"><g fill="#222"><path d="M8.8 0L14 2.8 8.8 5.6V3.8H5.7V1.8h3.1z"/><rect x="3.1" y="1.8" width="1.7" height="2"/><rect x="0.7" y="1.8" width="1.6" height="2"/><path d="M5.2 5.7L0 8.5l5.2 2.8V9.5h3.1V7.5H5.2z"/><rect x="9.2" y="7.5" width="1.7" height="2"/><rect x="11.7" y="7.5" width="1.6" height="2"/></g></svg><span style="position:absolute;left:929.0px;top:5.0px;width:16px;height:16px"><svg class="gear" viewBox="-8 -8 16 16" width="16" height="16"><g fill="#222"><rect x="-1.3" y="-6.2" width="2.6" height="12.4" transform="rotate(0)"/><rect x="-1.3" y="-6.2" width="2.6" height="12.4" transform="rotate(45)"/><rect x="-1.3" y="-6.2" width="2.6" height="12.4" transform="rotate(90)"/><rect x="-1.3" y="-6.2" width="2.6" height="12.4" transform="rotate(135)"/><circle r="4.3"/></g><circle r="2.4" fill="#f3f3f3"/></svg></span></div>
<div class="abs" style="left:8px;top:745px;width:990px;height:20px;background:#fff"></div>
<div class="abs" style="left:976px;top:158px;width:17px;height:587px;background:#f1f1f1"></div>
<div class="abs" style="left:978px;top:175px;width:13px;height:446px;background:#c1c1c1"></div>
<svg class="abs" style="left:976px;top:158px" width="17" height="17"><path d="M4.5 11.5h8l-4-4.5z" fill="#a3a3a3"/></svg>
<svg class="abs" style="left:976px;top:728px" width="17" height="17"><path d="M4.5 6h8l-4 4.5z" fill="#505050"/></svg>
<div class="t" style="left:28px;top:755px;font-size:14px;color:#333">Throughput</div>
<div class="abs" style="left:29px;top:775px;width:459px;height:1px;background:#eee"></div>
<div class="lg" style="left:260px;top:755px"><i style="background:#f00"></i></div><div class="lt" style="left:277px;top:755px">TX: 31.95 Mbps</div>
<div class="lg" style="left:374px;top:755px"><i style="background:#00f"></i></div><div class="lt" style="left:391px;top:755px">RX: 2.34 Mbps</div>
<div class="t" style="left:518px;top:755px;font-size:14px;color:#333">Power Usage<span class="caret" style="margin-left:5px"></span></div>
<div class="abs" style="left:518px;top:775px;width:460px;height:1px;background:#eee"></div>
<div class="lg" style="left:724px;top:755px"><i style="background:#f00"></i></div><div class="lt" style="left:741px;top:755px">8.6 W</div>
<div class="bx" style="left:853px;width:47px;border-radius:3px 0 0 3px">30 sec</div>
<div class="bx" style="left:899px;width:42px">5 min</div>
<div class="bx" style="left:940px;width:32px;border-radius:0 3px 3px 0;background:#e6e6e6;border-color:#adadad;box-shadow:inset 0 2px 4px rgba(0,0,0,.12)">1 hr</div>
<svg class="abs" style="left:977px;top:752px" width="13" height="13" viewBox="0 0 13 13"><path d="M1.8 2.3L11 11.2M11 2.3L1.8 11.2" stroke="#222" stroke-width="3.3" fill="none"/></svg>
<div class="yl" style="left:20px;width:37px;top:778.7px">60</div>
<div class="yl" style="left:20px;width:37px;top:801.0px">50</div>
<div class="yl" style="left:20px;width:37px;top:823.3px">40</div>
<div class="yl" style="left:20px;width:37px;top:845.6px">30</div>
<div class="yl" style="left:20px;width:37px;top:867.9px">20</div>
<div class="yl" style="left:20px;width:37px;top:890.2px">10</div>
<div class="yl" style="left:20px;width:37px;top:911.8px">Mbps</div>
<div class="yl" style="left:500px;width:33px;top:778.5px">10</div>
<div class="yl" style="left:500px;width:33px;top:805.5px">8</div>
<div class="yl" style="left:500px;width:33px;top:832.4px">6</div>
<div class="yl" style="left:500px;width:33px;top:859.4px">4</div>
<div class="yl" style="left:500px;width:33px;top:886.3px">2</div>
<div class="yl" style="left:500px;width:33px;top:912.3px">W</div>
<svg class="abs" style="left:0;top:0" width="1015" height="955" viewBox="0 0 1015 955">
<g stroke="#dadada" stroke-width="1" shape-rendering="crispEdges">
<line x1="134.5" y1="784" x2="134.5" y2="918"/>
<line x1="206.5" y1="784" x2="206.5" y2="918"/>
<line x1="278.5" y1="784" x2="278.5" y2="918"/>
<line x1="350.5" y1="784" x2="350.5" y2="918"/>
<line x1="422.5" y1="784" x2="422.5" y2="918"/>
<line x1="62" y1="806.5" x2="481" y2="806.5"/>
<line x1="62" y1="828.5" x2="481" y2="828.5"/>
<line x1="62" y1="850.5" x2="481" y2="850.5"/>
<line x1="62" y1="873.5" x2="481" y2="873.5"/>
<line x1="62" y1="895.5" x2="481" y2="895.5"/>
<line x1="612.5" y1="784" x2="612.5" y2="918"/>
<line x1="686.5" y1="784" x2="686.5" y2="918"/>
<line x1="761.3" y1="784" x2="761.3" y2="918"/>
<line x1="836.0" y1="784" x2="836.0" y2="918"/>
<line x1="910.6" y1="784" x2="910.6" y2="918"/>
<line x1="538" y1="810.5" x2="971" y2="810.5"/>
<line x1="538" y1="837.4" x2="971" y2="837.4"/>
<line x1="538" y1="864.4" x2="971" y2="864.4"/>
<line x1="538" y1="891.3" x2="971" y2="891.3"/>
</g>
<path d="M61.8 800.1 L63.3 802.5 L64.8 804.8 L66.3 807.1 L67.8 809.1 L69.3 811.0 L70.8 812.6 L72.3 813.7 L73.8 814.2 L75.3 813.9 L76.8 812.9 L78.3 811.4 L79.8 809.5 L81.3 807.5 L82.8 805.4 L84.3 803.4 L85.8 801.6 L87.3 800.3 L88.8 799.4 L90.3 799.2 L91.8 799.8 L93.3 801.2 L94.8 803.5 L96.3 806.9 L97.8 811.1 L99.3 815.8 L100.8 820.7 L102.3 825.3 L103.8 829.4 L105.3 833.0 L106.8 836.0 L108.3 838.4 L109.8 840.1 L111.3 841.2 L112.8 841.9 L114.3 842.2 L115.8 842.3 L117.3 842.1 L118.8 841.8 L120.3 841.2 L121.8 840.5 L123.3 839.6 L124.8 838.5 L126.3 837.2 L127.8 835.8 L129.3 834.1 L130.8 832.2 L132.3 830.1 L133.8 827.8 L135.3 825.2 L136.8 822.6 L138.3 820.0 L139.8 817.6 L141.3 815.4 L142.8 813.5 L144.3 812.0 L145.8 811.0 L147.3 810.4 L148.8 810.4 L150.3 810.9 L151.8 811.9 L153.3 813.3 L154.8 815.1 L156.3 817.0 L157.8 819.0 L159.3 820.9 L160.8 822.5 L162.3 823.7 L163.8 824.4 L165.3 824.8 L166.8 824.9 L168.3 824.7 L169.8 824.2 L171.3 823.6 L172.8 822.9 L174.3 822.1 L175.8 821.3 L177.3 820.6 L178.8 819.9 L180.3 819.3 L181.8 818.9 L183.3 818.6 L184.8 818.5 L186.3 818.5 L187.8 818.7 L189.3 819.1 L190.8 819.6 L192.3 820.2 L193.8 820.9 L195.3 821.7 L196.8 822.4 L198.3 823.1 L199.8 823.6 L201.3 823.9 L202.8 823.9 L204.3 823.4 L205.8 822.7 L207.3 821.6 L208.8 820.2 L210.3 818.5 L211.8 816.6 L213.3 814.6 L214.8 812.7 L216.3 811.0 L217.8 809.8 L219.3 809.1 L220.8 809.1 L222.3 809.7 L223.8 810.9 L225.3 812.5 L226.8 814.4 L228.3 816.5 L229.8 818.6 L231.3 820.5 L232.8 821.9 L234.3 822.6 L235.8 822.3 L237.3 821.3 L238.8 819.6 L240.3 817.4 L241.8 815.1 L243.3 812.7 L244.8 810.4 L246.3 808.3 L247.8 806.5 L249.3 805.0 L250.8 804.1 L252.3 803.7 L253.8 804.0 L255.3 804.6 L256.8 805.6 L258.3 806.8 L259.8 808.1 L261.3 809.3 L262.8 810.5 L264.3 811.4 L265.8 812.1 L267.3 812.3 L268.8 812.3 L270.3 812.1 L271.8 811.7 L273.3 811.4 L274.8 811.1 L276.3 811.1 L277.8 811.3 L279.3 811.8 L280.8 812.5 L282.3 813.3 L283.8 814.2 L285.3 815.1 L286.8 816.1 L288.3 817.0 L289.8 817.8 L291.3 818.6 L292.8 819.2 L294.3 819.6 L295.8 819.8 L297.3 819.7 L298.8 819.5 L300.3 819.0 L301.8 818.4 L303.3 817.7 L304.8 816.9 L306.3 816.1 L307.8 815.3 L309.3 814.5 L310.8 813.8 L312.3 813.2 L313.8 812.7 L315.3 812.3 L316.8 812.0 L318.3 811.8 L319.8 811.6 L321.3 811.6 L322.8 811.7 L324.3 811.8 L325.8 812.1 L327.3 812.4 L328.8 812.9 L330.3 813.4 L331.8 814.1 L333.3 814.8 L334.8 815.6 L336.3 816.4 L337.8 817.3 L339.3 818.2 L340.8 818.9 L342.3 819.6 L343.8 820.0 L345.3 820.2 L346.8 820.1 L348.3 819.7 L349.8 819.0 L351.3 818.0 L352.8 817.0 L354.3 815.9 L355.8 814.8 L357.3 813.9 L358.8 813.2 L360.3 812.8 L361.8 813.0 L363.3 813.8 L364.8 815.3 L366.3 817.6 L367.8 820.8 L369.3 824.7 L370.8 828.9 L372.3 833.1 L373.8 837.0 L375.3 840.4 L376.8 843.3 L378.3 845.6 L379.8 847.4 L381.3 848.7 L382.8 849.5 L384.3 850.0 L385.8 850.1 L387.3 849.9 L388.8 849.5 L390.3 849.0 L391.8 848.3 L393.3 847.5 L394.8 846.8 L396.3 846.1 L397.8 845.5 L399.3 844.9 L400.8 844.6 L402.3 844.4 L403.8 844.5 L405.3 844.8 L406.8 845.3 L408.3 845.9 L409.8 846.7 L411.3 847.4 L412.8 848.3 L414.3 849.0 L415.8 849.7 L417.3 850.2 L418.8 850.5 L420.3 850.5 L421.8 850.2 L423.3 849.5 L424.8 848.2 L426.3 846.5 L427.8 844.3 L429.3 841.7 L430.8 839.1 L432.3 836.5 L433.8 834.2 L435.3 832.3 L436.8 831.0 L438.3 830.3 L439.8 830.4 L441.3 831.1 L442.8 832.3 L444.3 833.7 L445.8 835.1 L447.3 836.5 L448.8 837.7 L450.3 838.6 L451.8 839.2 L453.3 839.3 L454.8 839.1 L456.3 838.6 L457.8 837.9 L459.3 837.1 L460.8 836.3 L462.3 835.6 L463.8 835.0 L465.3 834.7 L466.8 834.7 L468.3 835.1 L469.8 835.7 L471.3 836.6 L472.8 837.6 L474.3 838.6 L475.8 839.7 L477.3 840.8 L478.8 841.9 L480.0 842.8" fill="none" stroke="rgba(0,0,0,0.08)" stroke-width="3.6" transform="translate(0,2.2)"/>
<path d="M61.8 800.1 L63.3 802.5 L64.8 804.8 L66.3 807.1 L67.8 809.1 L69.3 811.0 L70.8 812.6 L72.3 813.7 L73.8 814.2 L75.3 813.9 L76.8 812.9 L78.3 811.4 L79.8 809.5 L81.3 807.5 L82.8 805.4 L84.3 803.4 L85.8 801.6 L87.3 800.3 L88.8 799.4 L90.3 799.2 L91.8 799.8 L93.3 801.2 L94.8 803.5 L96.3 806.9 L97.8 811.1 L99.3 815.8 L100.8 820.7 L102.3 825.3 L103.8 829.4 L105.3 833.0 L106.8 836.0 L108.3 838.4 L109.8 840.1 L111.3 841.2 L112.8 841.9 L114.3 842.2 L115.8 842.3 L117.3 842.1 L118.8 841.8 L120.3 841.2 L121.8 840.5 L123.3 839.6 L124.8 838.5 L126.3 837.2 L127.8 835.8 L129.3 834.1 L130.8 832.2 L132.3 830.1 L133.8 827.8 L135.3 825.2 L136.8 822.6 L138.3 820.0 L139.8 817.6 L141.3 815.4 L142.8 813.5 L144.3 812.0 L145.8 811.0 L147.3 810.4 L148.8 810.4 L150.3 810.9 L151.8 811.9 L153.3 813.3 L154.8 815.1 L156.3 817.0 L157.8 819.0 L159.3 820.9 L160.8 822.5 L162.3 823.7 L163.8 824.4 L165.3 824.8 L166.8 824.9 L168.3 824.7 L169.8 824.2 L171.3 823.6 L172.8 822.9 L174.3 822.1 L175.8 821.3 L177.3 820.6 L178.8 819.9 L180.3 819.3 L181.8 818.9 L183.3 818.6 L184.8 818.5 L186.3 818.5 L187.8 818.7 L189.3 819.1 L190.8 819.6 L192.3 820.2 L193.8 820.9 L195.3 821.7 L196.8 822.4 L198.3 823.1 L199.8 823.6 L201.3 823.9 L202.8 823.9 L204.3 823.4 L205.8 822.7 L207.3 821.6 L208.8 820.2 L210.3 818.5 L211.8 816.6 L213.3 814.6 L214.8 812.7 L216.3 811.0 L217.8 809.8 L219.3 809.1 L220.8 809.1 L222.3 809.7 L223.8 810.9 L225.3 812.5 L226.8 814.4 L228.3 816.5 L229.8 818.6 L231.3 820.5 L232.8 821.9 L234.3 822.6 L235.8 822.3 L237.3 821.3 L238.8 819.6 L240.3 817.4 L241.8 815.1 L243.3 812.7 L244.8 810.4 L246.3 808.3 L247.8 806.5 L249.3 805.0 L250.8 804.1 L252.3 803.7 L253.8 804.0 L255.3 804.6 L256.8 805.6 L258.3 806.8 L259.8 808.1 L261.3 809.3 L262.8 810.5 L264.3 811.4 L265.8 812.1 L267.3 812.3 L268.8 812.3 L270.3 812.1 L271.8 811.7 L273.3 811.4 L274.8 811.1 L276.3 811.1 L277.8 811.3 L279.3 811.8 L280.8 812.5 L282.3 813.3 L283.8 814.2 L285.3 815.1 L286.8 816.1 L288.3 817.0 L289.8 817.8 L291.3 818.6 L292.8 819.2 L294.3 819.6 L295.8 819.8 L297.3 819.7 L298.8 819.5 L300.3 819.0 L301.8 818.4 L303.3 817.7 L304.8 816.9 L306.3 816.1 L307.8 815.3 L309.3 814.5 L310.8 813.8 L312.3 813.2 L313.8 812.7 L315.3 812.3 L316.8 812.0 L318.3 811.8 L319.8 811.6 L321.3 811.6 L322.8 811.7 L324.3 811.8 L325.8 812.1 L327.3 812.4 L328.8 812.9 L330.3 813.4 L331.8 814.1 L333.3 814.8 L334.8 815.6 L336.3 816.4 L337.8 817.3 L339.3 818.2 L340.8 818.9 L342.3 819.6 L343.8 820.0 L345.3 820.2 L346.8 820.1 L348.3 819.7 L349.8 819.0 L351.3 818.0 L352.8 817.0 L354.3 815.9 L355.8 814.8 L357.3 813.9 L358.8 813.2 L360.3 812.8 L361.8 813.0 L363.3 813.8 L364.8 815.3 L366.3 817.6 L367.8 820.8 L369.3 824.7 L370.8 828.9 L372.3 833.1 L373.8 837.0 L375.3 840.4 L376.8 843.3 L378.3 845.6 L379.8 847.4 L381.3 848.7 L382.8 849.5 L384.3 850.0 L385.8 850.1 L387.3 849.9 L388.8 849.5 L390.3 849.0 L391.8 848.3 L393.3 847.5 L394.8 846.8 L396.3 846.1 L397.8 845.5 L399.3 844.9 L400.8 844.6 L402.3 844.4 L403.8 844.5 L405.3 844.8 L406.8 845.3 L408.3 845.9 L409.8 846.7 L411.3 847.4 L412.8 848.3 L414.3 849.0 L415.8 849.7 L417.3 850.2 L418.8 850.5 L420.3 850.5 L421.8 850.2 L423.3 849.5 L424.8 848.2 L426.3 846.5 L427.8 844.3 L429.3 841.7 L430.8 839.1 L432.3 836.5 L433.8 834.2 L435.3 832.3 L436.8 831.0 L438.3 830.3 L439.8 830.4 L441.3 831.1 L442.8 832.3 L444.3 833.7 L445.8 835.1 L447.3 836.5 L448.8 837.7 L450.3 838.6 L451.8 839.2 L453.3 839.3 L454.8 839.1 L456.3 838.6 L457.8 837.9 L459.3 837.1 L460.8 836.3 L462.3 835.6 L463.8 835.0 L465.3 834.7 L466.8 834.7 L468.3 835.1 L469.8 835.7 L471.3 836.6 L472.8 837.6 L474.3 838.6 L475.8 839.7 L477.3 840.8 L478.8 841.9 L480.0 842.8" fill="none" stroke="rgba(0,0,0,0.12)" stroke-width="2.1" transform="translate(0,1.4)"/>
<path d="M61.8 800.1 L63.3 802.5 L64.8 804.8 L66.3 807.1 L67.8 809.1 L69.3 811.0 L70.8 812.6 L72.3 813.7 L73.8 814.2 L75.3 813.9 L76.8 812.9 L78.3 811.4 L79.8 809.5 L81.3 807.5 L82.8 805.4 L84.3 803.4 L85.8 801.6 L87.3 800.3 L88.8 799.4 L90.3 799.2 L91.8 799.8 L93.3 801.2 L94.8 803.5 L96.3 806.9 L97.8 811.1 L99.3 815.8 L100.8 820.7 L102.3 825.3 L103.8 829.4 L105.3 833.0 L106.8 836.0 L108.3 838.4 L109.8 840.1 L111.3 841.2 L112.8 841.9 L114.3 842.2 L115.8 842.3 L117.3 842.1 L118.8 841.8 L120.3 841.2 L121.8 840.5 L123.3 839.6 L124.8 838.5 L126.3 837.2 L127.8 835.8 L129.3 834.1 L130.8 832.2 L132.3 830.1 L133.8 827.8 L135.3 825.2 L136.8 822.6 L138.3 820.0 L139.8 817.6 L141.3 815.4 L142.8 813.5 L144.3 812.0 L145.8 811.0 L147.3 810.4 L148.8 810.4 L150.3 810.9 L151.8 811.9 L153.3 813.3 L154.8 815.1 L156.3 817.0 L157.8 819.0 L159.3 820.9 L160.8 822.5 L162.3 823.7 L163.8 824.4 L165.3 824.8 L166.8 824.9 L168.3 824.7 L169.8 824.2 L171.3 823.6 L172.8 822.9 L174.3 822.1 L175.8 821.3 L177.3 820.6 L178.8 819.9 L180.3 819.3 L181.8 818.9 L183.3 818.6 L184.8 818.5 L186.3 818.5 L187.8 818.7 L189.3 819.1 L190.8 819.6 L192.3 820.2 L193.8 820.9 L195.3 821.7 L196.8 822.4 L198.3 823.1 L199.8 823.6 L201.3 823.9 L202.8 823.9 L204.3 823.4 L205.8 822.7 L207.3 821.6 L208.8 820.2 L210.3 818.5 L211.8 816.6 L213.3 814.6 L214.8 812.7 L216.3 811.0 L217.8 809.8 L219.3 809.1 L220.8 809.1 L222.3 809.7 L223.8 810.9 L225.3 812.5 L226.8 814.4 L228.3 816.5 L229.8 818.6 L231.3 820.5 L232.8 821.9 L234.3 822.6 L235.8 822.3 L237.3 821.3 L238.8 819.6 L240.3 817.4 L241.8 815.1 L243.3 812.7 L244.8 810.4 L246.3 808.3 L247.8 806.5 L249.3 805.0 L250.8 804.1 L252.3 803.7 L253.8 804.0 L255.3 804.6 L256.8 805.6 L258.3 806.8 L259.8 808.1 L261.3 809.3 L262.8 810.5 L264.3 811.4 L265.8 812.1 L267.3 812.3 L268.8 812.3 L270.3 812.1 L271.8 811.7 L273.3 811.4 L274.8 811.1 L276.3 811.1 L277.8 811.3 L279.3 811.8 L280.8 812.5 L282.3 813.3 L283.8 814.2 L285.3 815.1 L286.8 816.1 L288.3 817.0 L289.8 817.8 L291.3 818.6 L292.8 819.2 L294.3 819.6 L295.8 819.8 L297.3 819.7 L298.8 819.5 L300.3 819.0 L301.8 818.4 L303.3 817.7 L304.8 816.9 L306.3 816.1 L307.8 815.3 L309.3 814.5 L310.8 813.8 L312.3 813.2 L313.8 812.7 L315.3 812.3 L316.8 812.0 L318.3 811.8 L319.8 811.6 L321.3 811.6 L322.8 811.7 L324.3 811.8 L325.8 812.1 L327.3 812.4 L328.8 812.9 L330.3 813.4 L331.8 814.1 L333.3 814.8 L334.8 815.6 L336.3 816.4 L337.8 817.3 L339.3 818.2 L340.8 818.9 L342.3 819.6 L343.8 820.0 L345.3 820.2 L346.8 820.1 L348.3 819.7 L349.8 819.0 L351.3 818.0 L352.8 817.0 L354.3 815.9 L355.8 814.8 L357.3 813.9 L358.8 813.2 L360.3 812.8 L361.8 813.0 L363.3 813.8 L364.8 815.3 L366.3 817.6 L367.8 820.8 L369.3 824.7 L370.8 828.9 L372.3 833.1 L373.8 837.0 L375.3 840.4 L376.8 843.3 L378.3 845.6 L379.8 847.4 L381.3 848.7 L382.8 849.5 L384.3 850.0 L385.8 850.1 L387.3 849.9 L388.8 849.5 L390.3 849.0 L391.8 848.3 L393.3 847.5 L394.8 846.8 L396.3 846.1 L397.8 845.5 L399.3 844.9 L400.8 844.6 L402.3 844.4 L403.8 844.5 L405.3 844.8 L406.8 845.3 L408.3 845.9 L409.8 846.7 L411.3 847.4 L412.8 848.3 L414.3 849.0 L415.8 849.7 L417.3 850.2 L418.8 850.5 L420.3 850.5 L421.8 850.2 L423.3 849.5 L424.8 848.2 L426.3 846.5 L427.8 844.3 L429.3 841.7 L430.8 839.1 L432.3 836.5 L433.8 834.2 L435.3 832.3 L436.8 831.0 L438.3 830.3 L439.8 830.4 L441.3 831.1 L442.8 832.3 L444.3 833.7 L445.8 835.1 L447.3 836.5 L448.8 837.7 L450.3 838.6 L451.8 839.2 L453.3 839.3 L454.8 839.1 L456.3 838.6 L457.8 837.9 L459.3 837.1 L460.8 836.3 L462.3 835.6 L463.8 835.0 L465.3 834.7 L466.8 834.7 L468.3 835.1 L469.8 835.7 L471.3 836.6 L472.8 837.6 L474.3 838.6 L475.8 839.7 L477.3 840.8 L478.8 841.9 L480.0 842.8" fill="none" stroke="#f00" stroke-width="2.1" stroke-linejoin="round"/>
<path d="M61.8 909.7 L63.3 909.9 L64.8 910.1 L66.3 910.3 L67.8 910.5 L69.3 910.6 L70.8 910.8 L72.3 910.9 L73.8 911.0 L75.3 911.1 L76.8 911.1 L78.3 911.2 L79.8 911.2 L81.3 911.2 L82.8 911.3 L84.3 911.3 L85.8 911.3 L87.3 911.4 L88.8 911.5 L90.3 911.6 L91.8 911.7 L93.3 911.8 L94.8 912.0 L96.3 912.2 L97.8 912.3 L99.3 912.5 L100.8 912.7 L102.3 912.8 L103.8 913.0 L105.3 913.1 L106.8 913.2 L108.3 913.3 L109.8 913.4 L111.3 913.5 L112.8 913.5 L114.3 913.5 L115.8 913.5 L117.3 913.4 L118.8 913.4 L120.3 913.3 L121.8 913.1 L123.3 913.0 L124.8 912.8 L126.3 912.6 L127.8 912.4 L129.3 912.2 L130.8 912.0 L132.3 911.8 L133.8 911.6 L135.3 911.5 L136.8 911.4 L138.3 911.4 L139.8 911.4 L141.3 911.5 L142.8 911.6 L144.3 911.8 L145.8 912.1 L147.3 912.3 L148.8 912.7 L150.3 913.0 L151.8 913.2 L153.3 913.4 L154.8 913.6 L156.3 913.5 L157.8 913.4 L159.3 913.1 L160.8 912.5 L162.3 911.8 L163.8 910.9 L165.3 909.7 L166.8 908.4 L168.3 906.9 L169.8 905.4 L171.3 903.9 L172.8 902.6 L174.3 901.3 L175.8 900.3 L177.3 899.5 L178.8 898.8 L180.3 898.3 L181.8 898.0 L183.3 897.7 L184.8 897.7 L186.3 897.7 L187.8 897.9 L189.3 898.3 L190.8 898.8 L192.3 899.6 L193.8 900.5 L195.3 901.5 L196.8 902.6 L198.3 903.7 L199.8 904.6 L201.3 905.4 L202.8 906.1 L204.3 906.5 L205.8 906.8 L207.3 906.9 L208.8 906.8 L210.3 906.5 L211.8 906.1 L213.3 905.6 L214.8 905.1 L216.3 904.6 L217.8 904.1 L219.3 903.8 L220.8 903.8 L222.3 904.0 L223.8 904.4 L225.3 905.0 L226.8 905.6 L228.3 906.2 L229.8 906.7 L231.3 907.0 L232.8 907.2 L234.3 907.2 L235.8 907.0 L237.3 906.6 L238.8 906.1 L240.3 905.5 L241.8 904.8 L243.3 904.1 L244.8 903.5 L246.3 903.0 L247.8 902.5 L249.3 902.1 L250.8 901.9 L252.3 901.8 L253.8 901.8 L255.3 901.9 L256.8 902.1 L258.3 902.5 L259.8 902.9 L261.3 903.5 L262.8 904.1 L264.3 904.8 L265.8 905.5 L267.3 906.1 L268.8 906.8 L270.3 907.4 L271.8 907.9 L273.3 908.4 L274.8 908.9 L276.3 909.3 L277.8 909.6 L279.3 909.9 L280.8 910.2 L282.3 910.4 L283.8 910.5 L285.3 910.7 L286.8 910.8 L288.3 910.9 L289.8 911.0 L291.3 911.0 L292.8 911.1 L294.3 911.1 L295.8 911.2 L297.3 911.2 L298.8 911.3 L300.3 911.3 L301.8 911.4 L303.3 911.5 L304.8 911.6 L306.3 911.7 L307.8 911.8 L309.3 911.9 L310.8 911.9 L312.3 912.0 L313.8 911.9 L315.3 911.9 L316.8 911.7 L318.3 911.4 L319.8 911.1 L321.3 910.7 L322.8 910.2 L324.3 909.7 L325.8 909.2 L327.3 908.7 L328.8 908.3 L330.3 908.0 L331.8 907.7 L333.3 907.6 L334.8 907.6 L336.3 907.8 L337.8 908.1 L339.3 908.6 L340.8 909.1 L342.3 909.7 L343.8 910.3 L345.3 910.9 L346.8 911.4 L348.3 911.9 L349.8 912.3 L351.3 912.6 L352.8 912.8 L354.3 912.9 L355.8 913.0 L357.3 912.9 L358.8 912.8 L360.3 912.6 L361.8 912.4 L363.3 912.2 L364.8 912.0 L366.3 911.9 L367.8 911.7 L369.3 911.6 L370.8 911.5 L372.3 911.4 L373.8 911.4 L375.3 911.5 L376.8 911.6 L378.3 911.8 L379.8 912.0 L381.3 912.2 L382.8 912.5 L384.3 912.7 L385.8 912.9 L387.3 913.1 L388.8 913.2 L390.3 913.3 L391.8 913.3 L393.3 913.2 L394.8 913.1 L396.3 912.8 L397.8 912.6 L399.3 912.2 L400.8 911.9 L402.3 911.6 L403.8 911.3 L405.3 911.0 L406.8 910.7 L408.3 910.5 L409.8 910.4 L411.3 910.4 L412.8 910.4 L414.3 910.5 L415.8 910.6 L417.3 910.8 L418.8 910.9 L420.3 911.1 L421.8 911.3 L423.3 911.4 L424.8 911.5 L426.3 911.6 L427.8 911.7 L429.3 911.7 L430.8 911.8 L432.3 911.8 L433.8 911.8 L435.3 911.9 L436.8 912.0 L438.3 912.1 L439.8 912.2 L441.3 912.4 L442.8 912.6 L444.3 912.8 L445.8 912.9 L447.3 913.1 L448.8 913.3 L450.3 913.4 L451.8 913.5 L453.3 913.5 L454.8 913.5 L456.3 913.5 L457.8 913.5 L459.3 913.4 L460.8 913.3 L462.3 913.2 L463.8 913.1 L465.3 913.0 L466.8 912.9 L468.3 912.8 L469.8 912.7 L471.3 912.6 L472.8 912.5 L474.3 912.5 L475.8 912.4 L477.3 912.4 L478.8 912.3 L480.0 912.3" fill="none" stroke="rgba(0,0,0,0.08)" stroke-width="3.6" transform="translate(0,2.2)"/>
<path d="M61.8 909.7 L63.3 909.9 L64.8 910.1 L66.3 910.3 L67.8 910.5 L69.3 910.6 L70.8 910.8 L72.3 910.9 L73.8 911.0 L75.3 911.1 L76.8 911.1 L78.3 911.2 L79.8 911.2 L81.3 911.2 L82.8 911.3 L84.3 911.3 L85.8 911.3 L87.3 911.4 L88.8 911.5 L90.3 911.6 L91.8 911.7 L93.3 911.8 L94.8 912.0 L96.3 912.2 L97.8 912.3 L99.3 912.5 L100.8 912.7 L102.3 912.8 L103.8 913.0 L105.3 913.1 L106.8 913.2 L108.3 913.3 L109.8 913.4 L111.3 913.5 L112.8 913.5 L114.3 913.5 L115.8 913.5 L117.3 913.4 L118.8 913.4 L120.3 913.3 L121.8 913.1 L123.3 913.0 L124.8 912.8 L126.3 912.6 L127.8 912.4 L129.3 912.2 L130.8 912.0 L132.3 911.8 L133.8 911.6 L135.3 911.5 L136.8 911.4 L138.3 911.4 L139.8 911.4 L141.3 911.5 L142.8 911.6 L144.3 911.8 L145.8 912.1 L147.3 912.3 L148.8 912.7 L150.3 913.0 L151.8 913.2 L153.3 913.4 L154.8 913.6 L156.3 913.5 L157.8 913.4 L159.3 913.1 L160.8 912.5 L162.3 911.8 L163.8 910.9 L165.3 909.7 L166.8 908.4 L168.3 906.9 L169.8 905.4 L171.3 903.9 L172.8 902.6 L174.3 901.3 L175.8 900.3 L177.3 899.5 L178.8 898.8 L180.3 898.3 L181.8 898.0 L183.3 897.7 L184.8 897.7 L186.3 897.7 L187.8 897.9 L189.3 898.3 L190.8 898.8 L192.3 899.6 L193.8 900.5 L195.3 901.5 L196.8 902.6 L198.3 903.7 L199.8 904.6 L201.3 905.4 L202.8 906.1 L204.3 906.5 L205.8 906.8 L207.3 906.9 L208.8 906.8 L210.3 906.5 L211.8 906.1 L213.3 905.6 L214.8 905.1 L216.3 904.6 L217.8 904.1 L219.3 903.8 L220.8 903.8 L222.3 904.0 L223.8 904.4 L225.3 905.0 L226.8 905.6 L228.3 906.2 L229.8 906.7 L231.3 907.0 L232.8 907.2 L234.3 907.2 L235.8 907.0 L237.3 906.6 L238.8 906.1 L240.3 905.5 L241.8 904.8 L243.3 904.1 L244.8 903.5 L246.3 903.0 L247.8 902.5 L249.3 902.1 L250.8 901.9 L252.3 901.8 L253.8 901.8 L255.3 901.9 L256.8 902.1 L258.3 902.5 L259.8 902.9 L261.3 903.5 L262.8 904.1 L264.3 904.8 L265.8 905.5 L267.3 906.1 L268.8 906.8 L270.3 907.4 L271.8 907.9 L273.3 908.4 L274.8 908.9 L276.3 909.3 L277.8 909.6 L279.3 909.9 L280.8 910.2 L282.3 910.4 L283.8 910.5 L285.3 910.7 L286.8 910.8 L288.3 910.9 L289.8 911.0 L291.3 911.0 L292.8 911.1 L294.3 911.1 L295.8 911.2 L297.3 911.2 L298.8 911.3 L300.3 911.3 L301.8 911.4 L303.3 911.5 L304.8 911.6 L306.3 911.7 L307.8 911.8 L309.3 911.9 L310.8 911.9 L312.3 912.0 L313.8 911.9 L315.3 911.9 L316.8 911.7 L318.3 911.4 L319.8 911.1 L321.3 910.7 L322.8 910.2 L324.3 909.7 L325.8 909.2 L327.3 908.7 L328.8 908.3 L330.3 908.0 L331.8 907.7 L333.3 907.6 L334.8 907.6 L336.3 907.8 L337.8 908.1 L339.3 908.6 L340.8 909.1 L342.3 909.7 L343.8 910.3 L345.3 910.9 L346.8 911.4 L348.3 911.9 L349.8 912.3 L351.3 912.6 L352.8 912.8 L354.3 912.9 L355.8 913.0 L357.3 912.9 L358.8 912.8 L360.3 912.6 L361.8 912.4 L363.3 912.2 L364.8 912.0 L366.3 911.9 L367.8 911.7 L369.3 911.6 L370.8 911.5 L372.3 911.4 L373.8 911.4 L375.3 911.5 L376.8 911.6 L378.3 911.8 L379.8 912.0 L381.3 912.2 L382.8 912.5 L384.3 912.7 L385.8 912.9 L387.3 913.1 L388.8 913.2 L390.3 913.3 L391.8 913.3 L393.3 913.2 L394.8 913.1 L396.3 912.8 L397.8 912.6 L399.3 912.2 L400.8 911.9 L402.3 911.6 L403.8 911.3 L405.3 911.0 L406.8 910.7 L408.3 910.5 L409.8 910.4 L411.3 910.4 L412.8 910.4 L414.3 910.5 L415.8 910.6 L417.3 910.8 L418.8 910.9 L420.3 911.1 L421.8 911.3 L423.3 911.4 L424.8 911.5 L426.3 911.6 L427.8 911.7 L429.3 911.7 L430.8 911.8 L432.3 911.8 L433.8 911.8 L435.3 911.9 L436.8 912.0 L438.3 912.1 L439.8 912.2 L441.3 912.4 L442.8 912.6 L444.3 912.8 L445.8 912.9 L447.3 913.1 L448.8 913.3 L450.3 913.4 L451.8 913.5 L453.3 913.5 L454.8 913.5 L456.3 913.5 L457.8 913.5 L459.3 913.4 L460.8 913.3 L462.3 913.2 L463.8 913.1 L465.3 913.0 L466.8 912.9 L468.3 912.8 L469.8 912.7 L471.3 912.6 L472.8 912.5 L474.3 912.5 L475.8 912.4 L477.3 912.4 L478.8 912.3 L480.0 912.3" fill="none" stroke="rgba(0,0,0,0.12)" stroke-width="2.1" transform="translate(0,1.4)"/>
<path d="M61.8 909.7 L63.3 909.9 L64.8 910.1 L66.3 910.3 L67.8 910.5 L69.3 910.6 L70.8 910.8 L72.3 910.9 L73.8 911.0 L75.3 911.1 L76.8 911.1 L78.3 911.2 L79.8 911.2 L81.3 911.2 L82.8 911.3 L84.3 911.3 L85.8 911.3 L87.3 911.4 L88.8 911.5 L90.3 911.6 L91.8 911.7 L93.3 911.8 L94.8 912.0 L96.3 912.2 L97.8 912.3 L99.3 912.5 L100.8 912.7 L102.3 912.8 L103.8 913.0 L105.3 913.1 L106.8 913.2 L108.3 913.3 L109.8 913.4 L111.3 913.5 L112.8 913.5 L114.3 913.5 L115.8 913.5 L117.3 913.4 L118.8 913.4 L120.3 913.3 L121.8 913.1 L123.3 913.0 L124.8 912.8 L126.3 912.6 L127.8 912.4 L129.3 912.2 L130.8 912.0 L132.3 911.8 L133.8 911.6 L135.3 911.5 L136.8 911.4 L138.3 911.4 L139.8 911.4 L141.3 911.5 L142.8 911.6 L144.3 911.8 L145.8 912.1 L147.3 912.3 L148.8 912.7 L150.3 913.0 L151.8 913.2 L153.3 913.4 L154.8 913.6 L156.3 913.5 L157.8 913.4 L159.3 913.1 L160.8 912.5 L162.3 911.8 L163.8 910.9 L165.3 909.7 L166.8 908.4 L168.3 906.9 L169.8 905.4 L171.3 903.9 L172.8 902.6 L174.3 901.3 L175.8 900.3 L177.3 899.5 L178.8 898.8 L180.3 898.3 L181.8 898.0 L183.3 897.7 L184.8 897.7 L186.3 897.7 L187.8 897.9 L189.3 898.3 L190.8 898.8 L192.3 899.6 L193.8 900.5 L195.3 901.5 L196.8 902.6 L198.3 903.7 L199.8 904.6 L201.3 905.4 L202.8 906.1 L204.3 906.5 L205.8 906.8 L207.3 906.9 L208.8 906.8 L210.3 906.5 L211.8 906.1 L213.3 905.6 L214.8 905.1 L216.3 904.6 L217.8 904.1 L219.3 903.8 L220.8 903.8 L222.3 904.0 L223.8 904.4 L225.3 905.0 L226.8 905.6 L228.3 906.2 L229.8 906.7 L231.3 907.0 L232.8 907.2 L234.3 907.2 L235.8 907.0 L237.3 906.6 L238.8 906.1 L240.3 905.5 L241.8 904.8 L243.3 904.1 L244.8 903.5 L246.3 903.0 L247.8 902.5 L249.3 902.1 L250.8 901.9 L252.3 901.8 L253.8 901.8 L255.3 901.9 L256.8 902.1 L258.3 902.5 L259.8 902.9 L261.3 903.5 L262.8 904.1 L264.3 904.8 L265.8 905.5 L267.3 906.1 L268.8 906.8 L270.3 907.4 L271.8 907.9 L273.3 908.4 L274.8 908.9 L276.3 909.3 L277.8 909.6 L279.3 909.9 L280.8 910.2 L282.3 910.4 L283.8 910.5 L285.3 910.7 L286.8 910.8 L288.3 910.9 L289.8 911.0 L291.3 911.0 L292.8 911.1 L294.3 911.1 L295.8 911.2 L297.3 911.2 L298.8 911.3 L300.3 911.3 L301.8 911.4 L303.3 911.5 L304.8 911.6 L306.3 911.7 L307.8 911.8 L309.3 911.9 L310.8 911.9 L312.3 912.0 L313.8 911.9 L315.3 911.9 L316.8 911.7 L318.3 911.4 L319.8 911.1 L321.3 910.7 L322.8 910.2 L324.3 909.7 L325.8 909.2 L327.3 908.7 L328.8 908.3 L330.3 908.0 L331.8 907.7 L333.3 907.6 L334.8 907.6 L336.3 907.8 L337.8 908.1 L339.3 908.6 L340.8 909.1 L342.3 909.7 L343.8 910.3 L345.3 910.9 L346.8 911.4 L348.3 911.9 L349.8 912.3 L351.3 912.6 L352.8 912.8 L354.3 912.9 L355.8 913.0 L357.3 912.9 L358.8 912.8 L360.3 912.6 L361.8 912.4 L363.3 912.2 L364.8 912.0 L366.3 911.9 L367.8 911.7 L369.3 911.6 L370.8 911.5 L372.3 911.4 L373.8 911.4 L375.3 911.5 L376.8 911.6 L378.3 911.8 L379.8 912.0 L381.3 912.2 L382.8 912.5 L384.3 912.7 L385.8 912.9 L387.3 913.1 L388.8 913.2 L390.3 913.3 L391.8 913.3 L393.3 913.2 L394.8 913.1 L396.3 912.8 L397.8 912.6 L399.3 912.2 L400.8 911.9 L402.3 911.6 L403.8 911.3 L405.3 911.0 L406.8 910.7 L408.3 910.5 L409.8 910.4 L411.3 910.4 L412.8 910.4 L414.3 910.5 L415.8 910.6 L417.3 910.8 L418.8 910.9 L420.3 911.1 L421.8 911.3 L423.3 911.4 L424.8 911.5 L426.3 911.6 L427.8 911.7 L429.3 911.7 L430.8 911.8 L432.3 911.8 L433.8 911.8 L435.3 911.9 L436.8 912.0 L438.3 912.1 L439.8 912.2 L441.3 912.4 L442.8 912.6 L444.3 912.8 L445.8 912.9 L447.3 913.1 L448.8 913.3 L450.3 913.4 L451.8 913.5 L453.3 913.5 L454.8 913.5 L456.3 913.5 L457.8 913.5 L459.3 913.4 L460.8 913.3 L462.3 913.2 L463.8 913.1 L465.3 913.0 L466.8 912.9 L468.3 912.8 L469.8 912.7 L471.3 912.6 L472.8 912.5 L474.3 912.5 L475.8 912.4 L477.3 912.4 L478.8 912.3 L480.0 912.3" fill="none" stroke="#00f" stroke-width="2.1" stroke-linejoin="round"/>
<path d="M537.9 806.3 L539.4 805.8 L540.9 805.4 L542.4 805.0 L543.9 804.6 L545.4 804.3 L546.9 804.0 L548.4 803.8 L549.9 803.7 L551.4 803.6 L552.9 803.6 L554.4 803.7 L555.9 803.8 L557.4 804.0 L558.9 804.2 L560.4 804.4 L561.9 804.6 L563.4 804.8 L564.9 805.0 L566.4 805.2 L567.9 805.3 L569.4 805.4 L570.9 805.5 L572.4 805.5 L573.9 805.5 L575.4 805.5 L576.9 805.5 L578.4 805.4 L579.9 805.4 L581.4 805.4 L582.9 805.4 L584.4 805.4 L585.9 805.4 L587.4 805.5 L588.9 805.5 L590.4 805.5 L591.9 805.5 L593.4 805.5 L594.9 805.4 L596.4 805.3 L597.9 805.2 L599.4 805.1 L600.9 804.9 L602.4 804.7 L603.9 804.5 L605.4 804.3 L606.9 804.1 L608.4 803.9 L609.9 803.8 L611.4 803.8 L612.9 803.8 L614.4 803.9 L615.9 804.1 L617.4 804.3 L618.9 804.5 L620.4 804.7 L621.9 804.9 L623.4 805.1 L624.9 805.2 L626.4 805.4 L627.9 805.4 L629.4 805.4 L630.9 805.3 L632.4 805.2 L633.9 805.1 L635.4 804.9 L636.9 804.7 L638.4 804.5 L639.9 804.3 L641.4 804.2 L642.9 804.0 L644.4 803.9 L645.9 803.9 L647.4 803.9 L648.9 803.9 L650.4 803.9 L651.9 803.9 L653.4 804.0 L654.9 804.1 L656.4 804.1 L657.9 804.2 L659.4 804.3 L660.9 804.3 L662.4 804.3 L663.9 804.3 L665.4 804.3 L666.9 804.3 L668.4 804.2 L669.9 804.1 L671.4 803.9 L672.9 803.8 L674.4 803.7 L675.9 803.6 L677.4 803.5 L678.9 803.5 L680.4 803.5 L681.9 803.6 L683.4 803.7 L684.9 803.9 L686.4 804.2 L687.9 804.4 L689.4 804.7 L690.9 804.9 L692.4 805.1 L693.9 805.3 L695.4 805.4 L696.9 805.5 L698.4 805.4 L699.9 805.3 L701.4 805.0 L702.9 804.7 L704.4 804.4 L705.9 804.0 L707.4 803.6 L708.9 803.2 L710.4 802.8 L711.9 802.6 L713.4 802.3 L714.9 802.2 L716.4 802.2 L717.9 802.3 L719.4 802.6 L720.9 802.9 L722.4 803.2 L723.9 803.6 L725.4 804.0 L726.9 804.4 L728.4 804.7 L729.9 805.0 L731.4 805.2 L732.9 805.3 L734.4 805.3 L735.9 805.2 L737.4 805.0 L738.9 804.9 L740.4 804.6 L741.9 804.4 L743.4 804.2 L744.9 804.0 L746.4 803.9 L747.9 803.8 L749.4 803.8 L750.9 803.8 L752.4 803.9 L753.9 803.9 L755.4 804.0 L756.9 804.0 L758.4 804.0 L759.9 803.9 L761.4 803.8 L762.9 803.6 L764.4 803.4 L765.9 803.2 L767.4 802.9 L768.9 802.7 L770.4 802.5 L771.9 802.3 L773.4 802.2 L774.9 802.2 L776.4 802.2 L777.9 802.4 L779.4 802.6 L780.9 802.8 L782.4 803.0 L783.9 803.3 L785.4 803.5 L786.9 803.7 L788.4 803.9 L789.9 804.0 L791.4 804.0 L792.9 803.9 L794.4 803.8 L795.9 803.7 L797.4 803.5 L798.9 803.3 L800.4 803.0 L801.9 802.8 L803.4 802.7 L804.9 802.6 L806.4 802.5 L807.9 802.5 L809.4 802.6 L810.9 802.8 L812.4 802.9 L813.9 803.2 L815.4 803.4 L816.9 803.6 L818.4 803.9 L819.9 804.1 L821.4 804.2 L822.9 804.3 L824.4 804.4 L825.9 804.4 L827.4 804.3 L828.9 804.3 L830.4 804.2 L831.9 804.1 L833.4 804.1 L834.9 804.0 L836.4 804.0 L837.9 804.0 L839.4 804.1 L840.9 804.2 L842.4 804.3 L843.9 804.5 L845.4 804.6 L846.9 804.8 L848.4 804.9 L849.9 805.1 L851.4 805.3 L852.9 805.4 L854.4 805.5 L855.9 805.6 L857.4 805.6 L858.9 805.6 L860.4 805.6 L861.9 805.6 L863.4 805.5 L864.9 805.4 L866.4 805.3 L867.9 805.2 L869.4 805.0 L870.9 804.9 L872.4 804.7 L873.9 804.5 L875.4 804.4 L876.9 804.2 L878.4 804.0 L879.9 803.9 L881.4 803.8 L882.9 803.7 L884.4 803.6 L885.9 803.6 L887.4 803.6 L888.9 803.6 L890.4 803.7 L891.9 803.8 L893.4 804.0 L894.9 804.2 L896.4 804.4 L897.9 804.6 L899.4 804.8 L900.9 805.0 L902.4 805.1 L903.9 805.3 L905.4 805.4 L906.9 805.5 L908.4 805.6 L909.9 805.6 L911.4 805.6 L912.9 805.5 L914.4 805.4 L915.9 805.2 L917.4 805.0 L918.9 804.8 L920.4 804.7 L921.9 804.5 L923.4 804.3 L924.9 804.1 L926.4 804.0 L927.9 803.9 L929.4 803.9 L930.9 803.9 L932.4 803.9 L933.9 803.9 L935.4 803.9 L936.9 804.0 L938.4 804.0 L939.9 804.1 L941.4 804.2 L942.9 804.2 L944.4 804.3 L945.9 804.3 L947.4 804.3 L948.9 804.3 L950.4 804.3 L951.9 804.2 L953.4 804.1 L954.9 804.0 L956.4 803.9 L957.9 803.8 L959.4 803.7 L960.9 803.5 L962.4 803.4 L963.9 803.2 L965.4 803.0 L966.9 802.9 L968.4 802.7 L969.9 802.5 L970.0 802.5" fill="none" stroke="rgba(0,0,0,0.08)" stroke-width="3.4" transform="translate(0,2.2)"/>
<path d="M537.9 806.3 L539.4 805.8 L540.9 805.4 L542.4 805.0 L543.9 804.6 L545.4 804.3 L546.9 804.0 L548.4 803.8 L549.9 803.7 L551.4 803.6 L552.9 803.6 L554.4 803.7 L555.9 803.8 L557.4 804.0 L558.9 804.2 L560.4 804.4 L561.9 804.6 L563.4 804.8 L564.9 805.0 L566.4 805.2 L567.9 805.3 L569.4 805.4 L570.9 805.5 L572.4 805.5 L573.9 805.5 L575.4 805.5 L576.9 805.5 L578.4 805.4 L579.9 805.4 L581.4 805.4 L582.9 805.4 L584.4 805.4 L585.9 805.4 L587.4 805.5 L588.9 805.5 L590.4 805.5 L591.9 805.5 L593.4 805.5 L594.9 805.4 L596.4 805.3 L597.9 805.2 L599.4 805.1 L600.9 804.9 L602.4 804.7 L603.9 804.5 L605.4 804.3 L606.9 804.1 L608.4 803.9 L609.9 803.8 L611.4 803.8 L612.9 803.8 L614.4 803.9 L615.9 804.1 L617.4 804.3 L618.9 804.5 L620.4 804.7 L621.9 804.9 L623.4 805.1 L624.9 805.2 L626.4 805.4 L627.9 805.4 L629.4 805.4 L630.9 805.3 L632.4 805.2 L633.9 805.1 L635.4 804.9 L636.9 804.7 L638.4 804.5 L639.9 804.3 L641.4 804.2 L642.9 804.0 L644.4 803.9 L645.9 803.9 L647.4 803.9 L648.9 803.9 L650.4 803.9 L651.9 803.9 L653.4 804.0 L654.9 804.1 L656.4 804.1 L657.9 804.2 L659.4 804.3 L660.9 804.3 L662.4 804.3 L663.9 804.3 L665.4 804.3 L666.9 804.3 L668.4 804.2 L669.9 804.1 L671.4 803.9 L672.9 803.8 L674.4 803.7 L675.9 803.6 L677.4 803.5 L678.9 803.5 L680.4 803.5 L681.9 803.6 L683.4 803.7 L684.9 803.9 L686.4 804.2 L687.9 804.4 L689.4 804.7 L690.9 804.9 L692.4 805.1 L693.9 805.3 L695.4 805.4 L696.9 805.5 L698.4 805.4 L699.9 805.3 L701.4 805.0 L702.9 804.7 L704.4 804.4 L705.9 804.0 L707.4 803.6 L708.9 803.2 L710.4 802.8 L711.9 802.6 L713.4 802.3 L714.9 802.2 L716.4 802.2 L717.9 802.3 L719.4 802.6 L720.9 802.9 L722.4 803.2 L723.9 803.6 L725.4 804.0 L726.9 804.4 L728.4 804.7 L729.9 805.0 L731.4 805.2 L732.9 805.3 L734.4 805.3 L735.9 805.2 L737.4 805.0 L738.9 804.9 L740.4 804.6 L741.9 804.4 L743.4 804.2 L744.9 804.0 L746.4 803.9 L747.9 803.8 L749.4 803.8 L750.9 803.8 L752.4 803.9 L753.9 803.9 L755.4 804.0 L756.9 804.0 L758.4 804.0 L759.9 803.9 L761.4 803.8 L762.9 803.6 L764.4 803.4 L765.9 803.2 L767.4 802.9 L768.9 802.7 L770.4 802.5 L771.9 802.3 L773.4 802.2 L774.9 802.2 L776.4 802.2 L777.9 802.4 L779.4 802.6 L780.9 802.8 L782.4 803.0 L783.9 803.3 L785.4 803.5 L786.9 803.7 L788.4 803.9 L789.9 804.0 L791.4 804.0 L792.9 803.9 L794.4 803.8 L795.9 803.7 L797.4 803.5 L798.9 803.3 L800.4 803.0 L801.9 802.8 L803.4 802.7 L804.9 802.6 L806.4 802.5 L807.9 802.5 L809.4 802.6 L810.9 802.8 L812.4 802.9 L813.9 803.2 L815.4 803.4 L816.9 803.6 L818.4 803.9 L819.9 804.1 L821.4 804.2 L822.9 804.3 L824.4 804.4 L825.9 804.4 L827.4 804.3 L828.9 804.3 L830.4 804.2 L831.9 804.1 L833.4 804.1 L834.9 804.0 L836.4 804.0 L837.9 804.0 L839.4 804.1 L840.9 804.2 L842.4 804.3 L843.9 804.5 L845.4 804.6 L846.9 804.8 L848.4 804.9 L849.9 805.1 L851.4 805.3 L852.9 805.4 L854.4 805.5 L855.9 805.6 L857.4 805.6 L858.9 805.6 L860.4 805.6 L861.9 805.6 L863.4 805.5 L864.9 805.4 L866.4 805.3 L867.9 805.2 L869.4 805.0 L870.9 804.9 L872.4 804.7 L873.9 804.5 L875.4 804.4 L876.9 804.2 L878.4 804.0 L879.9 803.9 L881.4 803.8 L882.9 803.7 L884.4 803.6 L885.9 803.6 L887.4 803.6 L888.9 803.6 L890.4 803.7 L891.9 803.8 L893.4 804.0 L894.9 804.2 L896.4 804.4 L897.9 804.6 L899.4 804.8 L900.9 805.0 L902.4 805.1 L903.9 805.3 L905.4 805.4 L906.9 805.5 L908.4 805.6 L909.9 805.6 L911.4 805.6 L912.9 805.5 L914.4 805.4 L915.9 805.2 L917.4 805.0 L918.9 804.8 L920.4 804.7 L921.9 804.5 L923.4 804.3 L924.9 804.1 L926.4 804.0 L927.9 803.9 L929.4 803.9 L930.9 803.9 L932.4 803.9 L933.9 803.9 L935.4 803.9 L936.9 804.0 L938.4 804.0 L939.9 804.1 L941.4 804.2 L942.9 804.2 L944.4 804.3 L945.9 804.3 L947.4 804.3 L948.9 804.3 L950.4 804.3 L951.9 804.2 L953.4 804.1 L954.9 804.0 L956.4 803.9 L957.9 803.8 L959.4 803.7 L960.9 803.5 L962.4 803.4 L963.9 803.2 L965.4 803.0 L966.9 802.9 L968.4 802.7 L969.9 802.5 L970.0 802.5" fill="none" stroke="rgba(0,0,0,0.12)" stroke-width="1.9" transform="translate(0,1.4)"/>
<path d="M537.9 806.3 L539.4 805.8 L540.9 805.4 L542.4 805.0 L543.9 804.6 L545.4 804.3 L546.9 804.0 L548.4 803.8 L549.9 803.7 L551.4 803.6 L552.9 803.6 L554.4 803.7 L555.9 803.8 L557.4 804.0 L558.9 804.2 L560.4 804.4 L561.9 804.6 L563.4 804.8 L564.9 805.0 L566.4 805.2 L567.9 805.3 L569.4 805.4 L570.9 805.5 L572.4 805.5 L573.9 805.5 L575.4 805.5 L576.9 805.5 L578.4 805.4 L579.9 805.4 L581.4 805.4 L582.9 805.4 L584.4 805.4 L585.9 805.4 L587.4 805.5 L588.9 805.5 L590.4 805.5 L591.9 805.5 L593.4 805.5 L594.9 805.4 L596.4 805.3 L597.9 805.2 L599.4 805.1 L600.9 804.9 L602.4 804.7 L603.9 804.5 L605.4 804.3 L606.9 804.1 L608.4 803.9 L609.9 803.8 L611.4 803.8 L612.9 803.8 L614.4 803.9 L615.9 804.1 L617.4 804.3 L618.9 804.5 L620.4 804.7 L621.9 804.9 L623.4 805.1 L624.9 805.2 L626.4 805.4 L627.9 805.4 L629.4 805.4 L630.9 805.3 L632.4 805.2 L633.9 805.1 L635.4 804.9 L636.9 804.7 L638.4 804.5 L639.9 804.3 L641.4 804.2 L642.9 804.0 L644.4 803.9 L645.9 803.9 L647.4 803.9 L648.9 803.9 L650.4 803.9 L651.9 803.9 L653.4 804.0 L654.9 804.1 L656.4 804.1 L657.9 804.2 L659.4 804.3 L660.9 804.3 L662.4 804.3 L663.9 804.3 L665.4 804.3 L666.9 804.3 L668.4 804.2 L669.9 804.1 L671.4 803.9 L672.9 803.8 L674.4 803.7 L675.9 803.6 L677.4 803.5 L678.9 803.5 L680.4 803.5 L681.9 803.6 L683.4 803.7 L684.9 803.9 L686.4 804.2 L687.9 804.4 L689.4 804.7 L690.9 804.9 L692.4 805.1 L693.9 805.3 L695.4 805.4 L696.9 805.5 L698.4 805.4 L699.9 805.3 L701.4 805.0 L702.9 804.7 L704.4 804.4 L705.9 804.0 L707.4 803.6 L708.9 803.2 L710.4 802.8 L711.9 802.6 L713.4 802.3 L714.9 802.2 L716.4 802.2 L717.9 802.3 L719.4 802.6 L720.9 802.9 L722.4 803.2 L723.9 803.6 L725.4 804.0 L726.9 804.4 L728.4 804.7 L729.9 805.0 L731.4 805.2 L732.9 805.3 L734.4 805.3 L735.9 805.2 L737.4 805.0 L738.9 804.9 L740.4 804.6 L741.9 804.4 L743.4 804.2 L744.9 804.0 L746.4 803.9 L747.9 803.8 L749.4 803.8 L750.9 803.8 L752.4 803.9 L753.9 803.9 L755.4 804.0 L756.9 804.0 L758.4 804.0 L759.9 803.9 L761.4 803.8 L762.9 803.6 L764.4 803.4 L765.9 803.2 L767.4 802.9 L768.9 802.7 L770.4 802.5 L771.9 802.3 L773.4 802.2 L774.9 802.2 L776.4 802.2 L777.9 802.4 L779.4 802.6 L780.9 802.8 L782.4 803.0 L783.9 803.3 L785.4 803.5 L786.9 803.7 L788.4 803.9 L789.9 804.0 L791.4 804.0 L792.9 803.9 L794.4 803.8 L795.9 803.7 L797.4 803.5 L798.9 803.3 L800.4 803.0 L801.9 802.8 L803.4 802.7 L804.9 802.6 L806.4 802.5 L807.9 802.5 L809.4 802.6 L810.9 802.8 L812.4 802.9 L813.9 803.2 L815.4 803.4 L816.9 803.6 L818.4 803.9 L819.9 804.1 L821.4 804.2 L822.9 804.3 L824.4 804.4 L825.9 804.4 L827.4 804.3 L828.9 804.3 L830.4 804.2 L831.9 804.1 L833.4 804.1 L834.9 804.0 L836.4 804.0 L837.9 804.0 L839.4 804.1 L840.9 804.2 L842.4 804.3 L843.9 804.5 L845.4 804.6 L846.9 804.8 L848.4 804.9 L849.9 805.1 L851.4 805.3 L852.9 805.4 L854.4 805.5 L855.9 805.6 L857.4 805.6 L858.9 805.6 L860.4 805.6 L861.9 805.6 L863.4 805.5 L864.9 805.4 L866.4 805.3 L867.9 805.2 L869.4 805.0 L870.9 804.9 L872.4 804.7 L873.9 804.5 L875.4 804.4 L876.9 804.2 L878.4 804.0 L879.9 803.9 L881.4 803.8 L882.9 803.7 L884.4 803.6 L885.9 803.6 L887.4 803.6 L888.9 803.6 L890.4 803.7 L891.9 803.8 L893.4 804.0 L894.9 804.2 L896.4 804.4 L897.9 804.6 L899.4 804.8 L900.9 805.0 L902.4 805.1 L903.9 805.3 L905.4 805.4 L906.9 805.5 L908.4 805.6 L909.9 805.6 L911.4 805.6 L912.9 805.5 L914.4 805.4 L915.9 805.2 L917.4 805.0 L918.9 804.8 L920.4 804.7 L921.9 804.5 L923.4 804.3 L924.9 804.1 L926.4 804.0 L927.9 803.9 L929.4 803.9 L930.9 803.9 L932.4 803.9 L933.9 803.9 L935.4 803.9 L936.9 804.0 L938.4 804.0 L939.9 804.1 L941.4 804.2 L942.9 804.2 L944.4 804.3 L945.9 804.3 L947.4 804.3 L948.9 804.3 L950.4 804.3 L951.9 804.2 L953.4 804.1 L954.9 804.0 L956.4 803.9 L957.9 803.8 L959.4 803.7 L960.9 803.5 L962.4 803.4 L963.9 803.2 L965.4 803.0 L966.9 802.9 L968.4 802.7 L969.9 802.5 L970.0 802.5" fill="none" stroke="#f00" stroke-width="1.9" stroke-linejoin="round"/>
<rect x="577" y="878.7" width="368" height="31" fill="#fff"/>
<rect x="61.5" y="783.7" width="420" height="135" fill="none" stroke="#444" stroke-width="2"/>
<rect x="537.5" y="783.7" width="433.5" height="135" fill="none" stroke="#444" stroke-width="2"/>
<rect x="143" y="194" width="103" height="25.5" fill="#fff"/>
<path d="M179.6 222.6 L199.7 222.6 L199.7 238.3 L210.8 238.3 L189.4 256.8 L168.1 238.3 L179.6 238.3 Z" fill="none" stroke="#ed1c24" stroke-width="4.0" stroke-linejoin="round"/>
<path d="M535.9 677.6 L565.0 677.6 L565.0 713.8 L580.4 713.8 L550.5 750.1 L520.6 713.8 L535.9 713.8 Z" fill="none" stroke="#ed1c24" stroke-width="5.2" stroke-linejoin="round"/>
<path d="M939.6 662.7 L964.5 662.7 L964.5 705.2 L977.6 705.2 L952.1 748.6 L926.2 705.2 L939.6 705.2 Z" fill="none" stroke="#ed1c24" stroke-width="4.8" stroke-linejoin="round"/>
<path d="M668.1 813.5 L703.7 842.4 L685.5 842.4 L685.5 872.4 L650.5 872.4 L650.5 842.4 L632.4 842.4 Z" fill="none" stroke="#ed1c24" stroke-width="4.9" stroke-linejoin="round"/>
<text x="143" y="217.3" font-family="Liberation Sans, Arial, sans-serif" font-weight="bold" font-size="24" fill="#ed1c24">Selected</text>
<text x="579" y="901.8" font-family="Liberation Sans, Arial, sans-serif" font-weight="bold" font-size="24" fill="#ed1c24">Average power used 8.2 watts</text>
</svg>
<div class="t" style="left:8px;top:935.6px;font-size:12px;color:#333">Copyright 2014-2017 Netonix</div>
</body></html>
